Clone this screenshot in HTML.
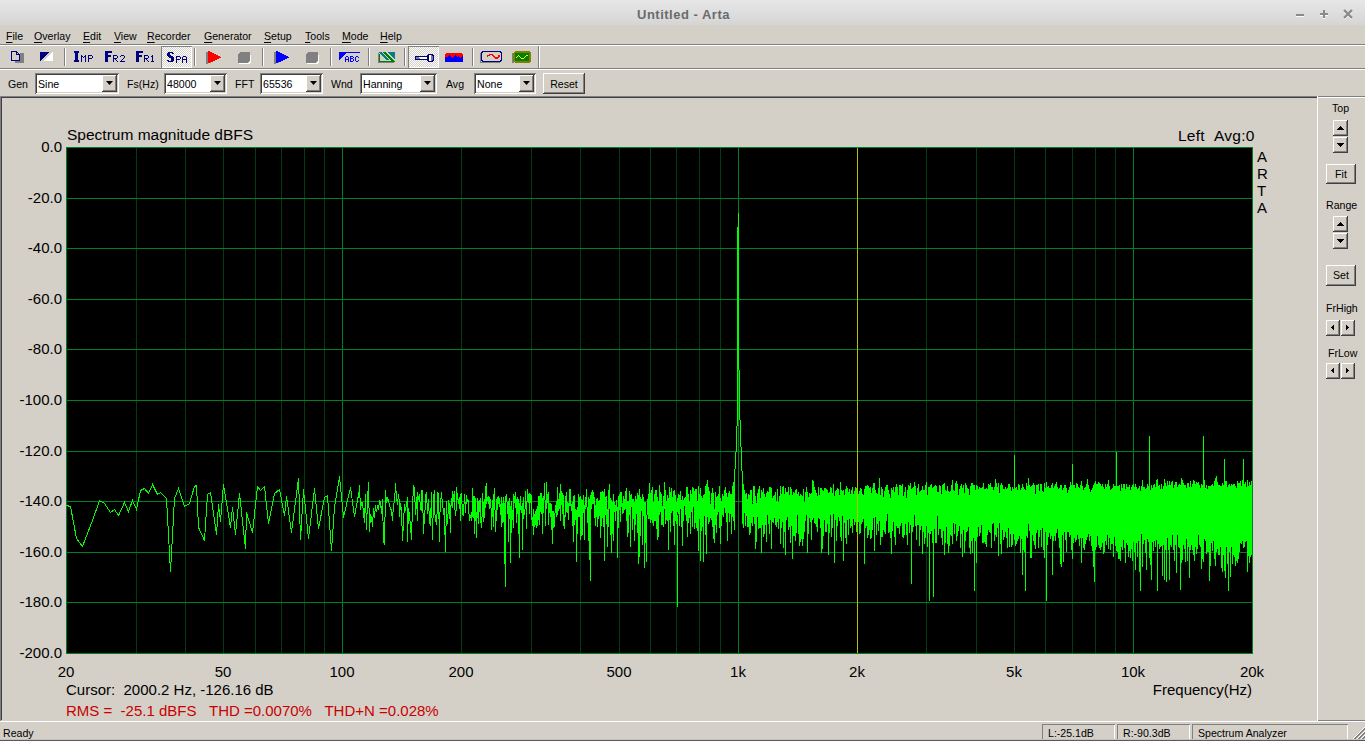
<!DOCTYPE html><html><head><meta charset="utf-8"><style>
*{margin:0;padding:0;box-sizing:border-box}
html,body{width:1365px;height:741px;overflow:hidden;background:#d4d0c8;font-family:"Liberation Sans",sans-serif;position:relative}
.a{position:absolute;white-space:nowrap}
.ui{font-size:11.5px;color:#000;line-height:13px;transform:scaleX(.92);transform-origin:0 0}
.ch{font-size:15px;color:#000;line-height:17px}
.sunk{background:#fff;box-shadow:inset 1px 1px #808080,inset -1px -1px #fff,inset 2px 2px #404040,inset -2px -2px #d4d0c8}
.btn{background:#d4d0c8;box-shadow:inset -1px -1px #404040,inset 1px 1px #fff,inset -2px -2px #808080,inset 2px 2px #d4d0c8}
.hl{position:absolute;height:1px}
.vl{position:absolute;width:1px}
u{text-decoration:underline;text-underline-offset:2px;text-decoration-thickness:1px}
</style></head><body><div class="a" style="left:0;top:0;width:1365px;height:25px;background:linear-gradient(#e7e7e7,#d5d5d5)"></div>
<div class="a" style="left:637px;top:6px;font-size:13px;letter-spacing:0.5px;font-weight:bold;color:#6b6b6b;line-height:17px">Untitled - Arta</div>

<div class="a" style="left:1296px;top:14px;width:8px;height:2px;background:#8a8a8a;box-shadow:0 1px #fafafa"></div>
<div class="a" style="left:1320px;top:13px;width:8px;height:2px;background:#8a8a8a;box-shadow:0 1px #fafafa"></div>
<div class="a" style="left:1323px;top:10px;width:2px;height:8px;background:#8a8a8a;box-shadow:0 1px #fafafa"></div>
<svg class="a" style="left:1342px;top:8px" width="12" height="12"><path d="M2 2L10 10M10 2L2 10" stroke="#fafafa" stroke-width="2.4" transform="translate(0,0.8)"/><path d="M2 2L10 10M10 2L2 10" stroke="#8a8a8a" stroke-width="2.4"/></svg>
<div class="a ui" style="left:6px;top:30px"><u>F</u>ile</div>
<div class="a ui" style="left:34px;top:30px"><u>O</u>verlay</div>
<div class="a ui" style="left:83px;top:30px"><u>E</u>dit</div>
<div class="a ui" style="left:114px;top:30px"><u>V</u>iew</div>
<div class="a ui" style="left:147px;top:30px"><u>R</u>ecorder</div>
<div class="a ui" style="left:204px;top:30px"><u>G</u>enerator</div>
<div class="a ui" style="left:264px;top:30px"><u>S</u>etup</div>
<div class="a ui" style="left:305px;top:30px"><u>T</u>ools</div>
<div class="a ui" style="left:342px;top:30px"><u>M</u>ode</div>
<div class="a ui" style="left:380px;top:30px"><u>H</u>elp</div>
<div class="hl" style="left:0;top:44px;width:1365px;background:#808080"></div>
<div class="hl" style="left:0;top:45px;width:1365px;background:#fff"></div>
<div class="hl" style="left:0;top:68px;width:1365px;background:#808080"></div>
<div class="hl" style="left:0;top:69px;width:1365px;background:#fff"></div>
<div class="hl" style="left:0;top:96px;width:1318px;background:#808080"></div>
<div class="hl" style="left:1px;top:97px;width:1316px;background:#404040"></div>
<div class="vl" style="left:0;top:96px;height:625px;background:#808080"></div>
<div class="vl" style="left:1px;top:97px;height:623px;background:#404040"></div>
<div class="vl" style="left:1317px;top:96px;height:626px;background:#fff"></div>
<div class="hl" style="left:0;top:721px;width:1318px;background:#fff"></div>
<div class="hl" style="left:1318px;top:96px;width:47px;background:#808080"></div>
<div class="hl" style="left:1318px;top:97px;width:47px;background:#fff"></div>
<div class="hl" style="left:1318px;top:720px;width:47px;background:#808080"></div>
<div class="hl" style="left:1318px;top:721px;width:47px;background:#fff"></div>
<div class="vl" style="left:64px;top:48px;height:18px;background:#808080"></div><div class="vl" style="left:65px;top:48px;height:18px;background:#fff"></div>
<div class="vl" style="left:194px;top:48px;height:18px;background:#808080"></div><div class="vl" style="left:195px;top:48px;height:18px;background:#fff"></div>
<div class="vl" style="left:262px;top:48px;height:18px;background:#808080"></div><div class="vl" style="left:263px;top:48px;height:18px;background:#fff"></div>
<div class="vl" style="left:330px;top:48px;height:18px;background:#808080"></div><div class="vl" style="left:331px;top:48px;height:18px;background:#fff"></div>
<div class="vl" style="left:368px;top:48px;height:18px;background:#808080"></div><div class="vl" style="left:369px;top:48px;height:18px;background:#fff"></div>
<div class="vl" style="left:404px;top:48px;height:18px;background:#808080"></div><div class="vl" style="left:405px;top:48px;height:18px;background:#fff"></div>
<div class="vl" style="left:472px;top:48px;height:18px;background:#808080"></div><div class="vl" style="left:473px;top:48px;height:18px;background:#fff"></div>
<div class="vl" style="left:538px;top:46px;height:22px;background:#808080"></div><div class="vl" style="left:539px;top:46px;height:22px;background:#fff"></div>
<div class="a ui" style="left:8px;top:78px">Gen</div>
<div class="a ui" style="left:127px;top:78px">Fs(Hz)</div>
<div class="a ui" style="left:235px;top:78px">FFT</div>
<div class="a ui" style="left:331px;top:78px">Wnd</div>
<div class="a ui" style="left:446px;top:78px">Avg</div>
<div class="a sunk" style="left:35px;top:73px;width:84px;height:21px"></div>
<div class="a ui" style="left:38px;top:78px">Sine</div>
<div class="a btn" style="left:102px;top:75px;width:15px;height:17px"></div>
<svg class="a" style="left:106px;top:81px" width="7" height="4"><path d="M0 0H7L3.5 4Z" fill="#000"/></svg>
<div class="a sunk" style="left:164px;top:73px;width:63px;height:21px"></div>
<div class="a ui" style="left:167px;top:78px">48000</div>
<div class="a btn" style="left:210px;top:75px;width:15px;height:17px"></div>
<svg class="a" style="left:214px;top:81px" width="7" height="4"><path d="M0 0H7L3.5 4Z" fill="#000"/></svg>
<div class="a sunk" style="left:260px;top:73px;width:63px;height:21px"></div>
<div class="a ui" style="left:263px;top:78px">65536</div>
<div class="a btn" style="left:306px;top:75px;width:15px;height:17px"></div>
<svg class="a" style="left:310px;top:81px" width="7" height="4"><path d="M0 0H7L3.5 4Z" fill="#000"/></svg>
<div class="a sunk" style="left:360px;top:73px;width:77px;height:21px"></div>
<div class="a ui" style="left:363px;top:78px">Hanning</div>
<div class="a btn" style="left:420px;top:75px;width:15px;height:17px"></div>
<svg class="a" style="left:424px;top:81px" width="7" height="4"><path d="M0 0H7L3.5 4Z" fill="#000"/></svg>
<div class="a sunk" style="left:474px;top:73px;width:62px;height:21px"></div>
<div class="a ui" style="left:477px;top:78px">None</div>
<div class="a btn" style="left:519px;top:75px;width:15px;height:17px"></div>
<svg class="a" style="left:523px;top:81px" width="7" height="4"><path d="M0 0H7L3.5 4Z" fill="#000"/></svg>
<div class="a btn" style="left:543px;top:73px;width:42px;height:21px"><div class="ui" style="text-align:center;line-height:23px;transform-origin:50% 0">Reset</div></div>
<div class="a ch" style="left:67px;top:126px;font-size:15.5px">Spectrum magnitude dBFS</div>
<div class="a ch" style="left:1178px;top:127px;font-size:15.5px;letter-spacing:.25px">Left&nbsp;&nbsp;Avg:0</div>
<div class="a ch" style="left:1257px;top:148px">A</div>
<div class="a ch" style="left:1257px;top:165px">R</div>
<div class="a ch" style="left:1257px;top:182px">T</div>
<div class="a ch" style="left:1257px;top:199px">A</div>
<div class="a ch" style="right:1303px;top:138px">0.0</div>
<div class="a ch" style="right:1303px;top:189px">-20.0</div>
<div class="a ch" style="right:1303px;top:239px">-40.0</div>
<div class="a ch" style="right:1303px;top:290px">-60.0</div>
<div class="a ch" style="right:1303px;top:340px">-80.0</div>
<div class="a ch" style="right:1303px;top:391px">-100.0</div>
<div class="a ch" style="right:1303px;top:442px">-120.0</div>
<div class="a ch" style="right:1303px;top:492px">-140.0</div>
<div class="a ch" style="right:1303px;top:543px">-160.0</div>
<div class="a ch" style="right:1303px;top:593px">-180.0</div>
<div class="a ch" style="right:1303px;top:644px">-200.0</div>
<div class="a ch" style="left:26px;width:80px;text-align:center;top:663px">20</div>
<div class="a ch" style="left:183px;width:80px;text-align:center;top:663px">50</div>
<div class="a ch" style="left:302px;width:80px;text-align:center;top:663px">100</div>
<div class="a ch" style="left:421px;width:80px;text-align:center;top:663px">200</div>
<div class="a ch" style="left:579px;width:80px;text-align:center;top:663px">500</div>
<div class="a ch" style="left:698px;width:80px;text-align:center;top:663px">1k</div>
<div class="a ch" style="left:817px;width:80px;text-align:center;top:663px">2k</div>
<div class="a ch" style="left:974px;width:80px;text-align:center;top:663px">5k</div>
<div class="a ch" style="left:1093px;width:80px;text-align:center;top:663px">10k</div>
<div class="a ch" style="left:1212px;width:80px;text-align:center;top:663px">20k</div>
<div class="a ch" style="left:66px;top:681px">Cursor:&nbsp;&nbsp;2000.2 Hz, -126.16 dB</div>
<div class="a ch" style="right:113px;top:681px">Frequency(Hz)</div>
<div class="a ch" style="left:66px;top:702px;color:#c80000">RMS =&nbsp;&nbsp;-25.1 dBFS&nbsp;&nbsp;&nbsp;THD =0.0070%&nbsp;&nbsp;&nbsp;THD+N =0.028%</div>
<svg class="a" style="left:0;top:0" width="1365" height="741" shape-rendering="crispEdges">
<rect x="66" y="147" width="1187" height="507" fill="#000"/>
<path d="M136.5 147V653M185.5 147V653M223.5 147V653M255.5 147V653M281.5 147V653M304.5 147V653M324.5 147V653M461.5 147V653M531.5 147V653M580.5 147V653M619.5 147V653M650.5 147V653M676.5 147V653M699.5 147V653M720.5 147V653M857.5 147V653M926.5 147V653M976.5 147V653M1014.5 147V653M1045.5 147V653M1072.5 147V653M1095.5 147V653M1115.5 147V653" stroke="#003c14" stroke-width="1" fill="none"/>
<path d="M342.5 147V653M738.5 147V653M1133.5 147V653M66 198.5H1252M66 248.5H1252M66 299.5H1252M66 349.5H1252M66 400.5H1252M66 451.5H1252M66 501.5H1252M66 552.5H1252M66 602.5H1252" stroke="#008020" stroke-width="1" fill="none"/>
<rect x="66.5" y="147.5" width="1186" height="506" stroke="#008020" fill="none"/>
<path d="M66.5 505.5L70.5 506.5L76.5 538.5L82.5 546.5L92.5 520.5L99.5 500.5L104.5 503.5L110.5 512.5L114.5 509.5L118.5 515.5L124.5 502.5L128.5 511.5L132.5 500.5L136.5 509.5L140.5 490.5L144.5 488.5L148.5 493.5L152.5 484.5L157.5 494.5L160.5 492.5L166.5 498.5L170.5 571.5L174.5 498.5L178.5 488.5L184.5 506.5L189.5 503.5L194.5 486.5L196.5 485.5L198.5 527.5L204.5 540.5L207.5 494.5L210.5 492.5L216.5 534.5L218.5 504.5L220.5 521.5L223.5 484.5L230.5 527.5L232.5 507.5L235.5 534.5L239.5 493.5L245.5 548.5L246.5 512.5L252.5 532.5L257.5 486.5L260.5 490.5L264.5 486.5L268.5 523.5L274.5 493.5L279.5 489.5L284.5 515.5L286.5 496.5L291.5 532.5L298.5 478.5L300.5 539.5L303.5 489.5L308.5 538.5L314.5 488.5L318.5 528.5L324.5 497.5L327.5 495.5L331.5 550.5L334.5 507.5L339.5 476.5L343.5 517.5L350.5 487.5L354.5 516.5L359.5 489.5L359.5 485.5L360.5 509.5L361.5 502.5L362.5 502.5L364.5 522.5L365.5 494.5L366.5 529.5L367.5 500.5L368.5 482.5L369.5 531.5L370.5 515.5L371.5 517.5L372.5 526.5L373.5 508.5L374.5 517.5L375.5 505.5L376.5 511.5L377.5 506.5L378.5 509.5L379.5 500.5L380.5 501.5L381.5 513.5L382.5 499.5L383.5 541.5L384.5 544.5L385.5 490.5L386.5 502.5L387.5 498.5L388.5 500.5L389.5 505.5L390.5 508.5L391.5 510.5L392.5 520.5L393.5 503.5L394.5 502.5L395.5 483.5L396.5 497.5L397.5 504.5L398.5 494.5L399.5 502.5L399.5 502.5L399.5 516.5L399.5 516.5L400.5 503.5L401.5 510.5L402.5 540.5L403.5 521.5L404.5 504.5L405.5 510.5L406.5 504.5L407.5 497.5L407.5 497.5L407.5 541.5L407.5 541.5L408.5 508.5L409.5 515.5L410.5 525.5L411.5 539.5L412.5 504.5L412.5 504.5L412.5 505.5L412.5 505.5L413.5 486.5L414.5 488.5L415.5 514.5L416.5 497.5L417.5 520.5L417.5 520.5L417.5 492.5L417.5 492.5L418.5 499.5L419.5 494.5L420.5 509.5L421.5 510.5L421.5 510.5L421.5 490.5L421.5 490.5L422.5 490.5L423.5 533.5L424.5 515.5L425.5 505.5L425.5 505.5L425.5 495.5L425.5 495.5L426.5 492.5L427.5 513.5L428.5 500.5L428.5 500.5L428.5 499.5L428.5 499.5L429.5 521.5L430.5 525.5L431.5 492.5L431.5 492.5L431.5 495.5L431.5 495.5L432.5 539.5L433.5 497.5L434.5 490.5L434.5 490.5L434.5 509.5L434.5 509.5L435.5 519.5L436.5 524.5L437.5 504.5L437.5 504.5L437.5 492.5L437.5 492.5L438.5 494.5L439.5 541.5L439.5 541.5L439.5 521.5L439.5 521.5L440.5 503.5L441.5 492.5L442.5 505.5L442.5 505.5L442.5 500.5L442.5 500.5L443.5 514.5L444.5 508.5L444.5 508.5L444.5 518.5L444.5 518.5L445.5 551.5L446.5 501.5L446.5 501.5L446.5 520.5L446.5 520.5L447.5 523.5L448.5 505.5L448.5 505.5L448.5 500.5L448.5 500.5L449.5 504.5L450.5 532.5L450.5 532.5L450.5 506.5L450.5 506.5L451.5 504.5L452.5 491.5L452.5 491.5L452.5 507.5L452.5 507.5L453.5 497.5L454.5 491.5L454.5 491.5L454.5 504.5L454.5 504.5L455.5 515.5L456.5 507.5L456.5 507.5L456.5 487.5L456.5 487.5L457.5 498.5L458.5 500.5L458.5 500.5L458.5 503.5L458.5 503.5L459.5 497.5L460.5 520.5L460.5 520.5L460.5 494.5L460.5 494.5L461.5 495.5L461.5 495.5L461.5 493.5L461.5 493.5L462.5 514.5L463.5 515.5L463.5 515.5L463.5 513.5L463.5 513.5L464.5 494.5L465.5 512.5L465.5 512.5L465.5 502.5L465.5 502.5L466.5 503.5L466.5 503.5L466.5 495.5L466.5 495.5L467.5 501.5L468.5 500.5L468.5 500.5L468.5 506.5L468.5 506.5L469.5 520.5L469.5 520.5L469.5 516.5L469.5 516.5L470.5 515.5L471.5 520.5L471.5 520.5L471.5 512.5L471.5 512.5L472.5 516.5L472.5 516.5L472.5 488.5L472.5 488.5L473.5 502.5L474.5 533.5L474.5 533.5L474.5 496.5L474.5 496.5L475.5 500.5L475.5 500.5L475.5 520.5L475.5 520.5L476.5 512.5L476.5 512.5L476.5 537.5L476.5 537.5L477.5 498.5L478.5 504.5L478.5 504.5L478.5 523.5L478.5 523.5L479.5 500.5L479.5 500.5L479.5 502.5L479.5 502.5L480.5 498.5L480.5 498.5L480.5 517.5L480.5 517.5L481.5 527.5L482.5 507.5L482.5 507.5L482.5 493.5L482.5 493.5L483.5 510.5L483.5 510.5L483.5 521.5L483.5 521.5L484.5 499.5L484.5 499.5L484.5 517.5L484.5 517.5L485.5 499.5L485.5 499.5L485.5 488.5L485.5 488.5L486.5 483.5L486.5 483.5L486.5 503.5L486.5 503.5L487.5 497.5L488.5 503.5L488.5 503.5L488.5 496.5L488.5 496.5L489.5 498.5L489.5 498.5L489.5 508.5L489.5 508.5L490.5 502.5L490.5 502.5L490.5 499.5L490.5 499.5L491.5 516.5L491.5 516.5L491.5 529.5L491.5 529.5L492.5 505.5L492.5 505.5L492.5 505.5L492.5 505.5L493.5 494.5L493.5 494.5L493.5 526.5L493.5 526.5L494.5 488.5L494.5 488.5L494.5 497.5L494.5 497.5L495.5 521.5L495.5 521.5L495.5 531.5L495.5 531.5L496.5 510.5L496.5 510.5L496.5 501.5L496.5 501.5L497.5 497.5L497.5 497.5L497.5 509.5L497.5 509.5L498.5 496.5L498.5 496.5L498.5 503.5L498.5 503.5L499.5 504.5L499.5 504.5L499.5 498.5L499.5 498.5L500.5 514.5L500.5 514.5L500.5 511.5L500.5 511.5L501.5 497.5L501.5 497.5L501.5 526.5L501.5 526.5L502.5 503.5L502.5 503.5L502.5 522.5L502.5 522.5L503.5 520.5L503.5 520.5L503.5 497.5L503.5 497.5L504.5 507.5L504.5 507.5L504.5 540.5L504.5 540.5L505.5 586.5L505.5 586.5L505.5 496.5L505.5 496.5L506.5 501.5L506.5 501.5L506.5 494.5L506.5 494.5L507.5 509.5L507.5 509.5L507.5 513.5L507.5 513.5L508.5 501.5L508.5 501.5L508.5 541.5L508.5 541.5L509.5 498.5L509.5 498.5L509.5 505.5L509.5 505.5L510.5 507.5L510.5 507.5L510.5 562.5L510.5 562.5L511.5 504.5L511.5 504.5L511.5 501.5L511.5 501.5L512.5 518.5L512.5 518.5L512.5 511.5L512.5 511.5L513.5 527.5L513.5 527.5L513.5 493.5L513.5 509.5L514.5 496.5L514.5 496.5L514.5 499.5L514.5 499.5L515.5 496.5L515.5 496.5L515.5 492.5L515.5 492.5L516.5 522.5L516.5 522.5L516.5 501.5L516.5 501.5L517.5 497.5L517.5 497.5L517.5 498.5L517.5 498.5L518.5 529.5L518.5 529.5L518.5 498.5L518.5 509.5L519.5 557.5L519.5 557.5L519.5 510.5L519.5 510.5L520.5 496.5L520.5 496.5L520.5 509.5L520.5 509.5L521.5 510.5L521.5 510.5L521.5 506.5L521.5 506.5L522.5 519.5L522.5 549.5L522.5 508.5L522.5 508.5L523.5 497.5L523.5 497.5L523.5 518.5L523.5 518.5L524.5 512.5L524.5 512.5L524.5 512.5L524.5 512.5L525.5 506.5L525.5 506.5L525.5 491.5L525.5 491.5L526.5 510.5L526.5 528.5L526.5 509.5L526.5 509.5L527.5 495.5L527.5 495.5L527.5 489.5L527.5 489.5L528.5 498.5L528.5 498.5L528.5 502.5L528.5 502.5L529.5 493.5L529.5 493.5L529.5 513.5L529.5 497.5L530.5 494.5L530.5 494.5L530.5 502.5L530.5 502.5L531.5 495.5L531.5 495.5L531.5 519.5L531.5 519.5L532.5 518.5L532.5 518.5L532.5 517.5L532.5 517.5L533.5 534.5L533.5 534.5L533.5 509.5L533.5 509.5L534.5 526.5L534.5 526.5L534.5 513.5L534.5 516.5L535.5 511.5L535.5 511.5L535.5 524.5L535.5 524.5L536.5 523.5L536.5 508.5L536.5 527.5L536.5 527.5L537.5 523.5L537.5 523.5L537.5 516.5L537.5 516.5L538.5 496.5L538.5 496.5L538.5 516.5L538.5 515.5L539.5 524.5L539.5 524.5L539.5 498.5L539.5 498.5L540.5 493.5L540.5 493.5L540.5 511.5L540.5 504.5L541.5 494.5L541.5 494.5L541.5 493.5L541.5 493.5L542.5 533.5L542.5 533.5L542.5 500.5L542.5 500.5L543.5 496.5L543.5 496.5L543.5 512.5L543.5 512.5L544.5 483.5L544.5 483.5L544.5 493.5L544.5 492.5L545.5 507.5L545.5 503.5L545.5 525.5L545.5 525.5L546.5 482.5L546.5 482.5L546.5 508.5L546.5 508.5L547.5 494.5L547.5 493.5L547.5 502.5L547.5 502.5L548.5 500.5L548.5 524.5L548.5 492.5L548.5 492.5L549.5 512.5L549.5 512.5L549.5 506.5L549.5 506.5L550.5 512.5L550.5 512.5L550.5 503.5L550.5 503.5L551.5 529.5L551.5 529.5L551.5 504.5L551.5 504.5L552.5 543.5L552.5 543.5L552.5 511.5L552.5 511.5L553.5 527.5L553.5 527.5L553.5 511.5L553.5 511.5L554.5 525.5L554.5 526.5L554.5 521.5L554.5 521.5L555.5 505.5L555.5 505.5L555.5 505.5L555.5 505.5L556.5 516.5L556.5 516.5L556.5 501.5L556.5 501.5L557.5 509.5L557.5 514.5L557.5 487.5L557.5 487.5L558.5 510.5L558.5 510.5L558.5 510.5L558.5 510.5L559.5 496.5L559.5 508.5L559.5 493.5L559.5 493.5L560.5 520.5L560.5 520.5L560.5 484.5L560.5 484.5L561.5 497.5L561.5 497.5L561.5 494.5L561.5 495.5L562.5 513.5L562.5 513.5L562.5 493.5L562.5 493.5L563.5 496.5L563.5 496.5L563.5 525.5L563.5 500.5L564.5 528.5L564.5 528.5L564.5 516.5L564.5 527.5L565.5 507.5L565.5 507.5L565.5 495.5L565.5 503.5L566.5 511.5L566.5 511.5L566.5 491.5L566.5 496.5L567.5 506.5L567.5 506.5L567.5 512.5L567.5 512.5L568.5 505.5L568.5 519.5L568.5 503.5L568.5 503.5L569.5 505.5L569.5 505.5L569.5 489.5L569.5 489.5L570.5 489.5L570.5 489.5L570.5 503.5L570.5 503.5L571.5 508.5L571.5 503.5L571.5 510.5L571.5 510.5L572.5 507.5L572.5 501.5L572.5 510.5L572.5 510.5L573.5 541.5L573.5 541.5L573.5 497.5L573.5 497.5L574.5 495.5L574.5 495.5L574.5 524.5L574.5 500.5L575.5 518.5L575.5 519.5L575.5 509.5L575.5 509.5L576.5 518.5L576.5 509.5L576.5 561.5L576.5 561.5L577.5 507.5L577.5 507.5L577.5 531.5L577.5 531.5L578.5 494.5L578.5 494.5L578.5 516.5L578.5 512.5L579.5 504.5L579.5 496.5L579.5 516.5L579.5 516.5L580.5 496.5L580.5 496.5L580.5 539.5L580.5 539.5L581.5 533.5L581.5 533.5L581.5 499.5L581.5 499.5L582.5 501.5L582.5 501.5L582.5 534.5L582.5 501.5L583.5 504.5L583.5 494.5L583.5 509.5L583.5 509.5L584.5 516.5L584.5 504.5L584.5 539.5L584.5 513.5L585.5 505.5L585.5 505.5L585.5 498.5L585.5 504.5L586.5 489.5L586.5 488.5L586.5 503.5L586.5 503.5L587.5 510.5L587.5 510.5L587.5 522.5L587.5 522.5L588.5 512.5L588.5 496.5L588.5 540.5L588.5 540.5L589.5 506.5L589.5 498.5L589.5 538.5L589.5 538.5L590.5 580.5L590.5 580.5L590.5 494.5L590.5 507.5L591.5 492.5L591.5 492.5L591.5 508.5L591.5 508.5L592.5 500.5L592.5 500.5L592.5 489.5L592.5 495.5L593.5 503.5L593.5 491.5L593.5 503.5L593.5 503.5L594.5 497.5L594.5 497.5L594.5 509.5L594.5 509.5L595.5 525.5L595.5 525.5L595.5 507.5L595.5 507.5L596.5 502.5L596.5 516.5L596.5 499.5L596.5 499.5L597.5 503.5L597.5 526.5L597.5 498.5L597.5 498.5L598.5 518.5L598.5 518.5L598.5 500.5L598.5 505.5L599.5 514.5L599.5 499.5L599.5 515.5L599.5 515.5L600.5 508.5L600.5 491.5L600.5 537.5L600.5 537.5L601.5 514.5L601.5 514.5L601.5 491.5L601.5 508.5L602.5 511.5L602.5 490.5L602.5 517.5L602.5 517.5L603.5 504.5L603.5 504.5L603.5 492.5L603.5 492.5L604.5 560.5L604.5 560.5L604.5 488.5L604.5 500.5L605.5 497.5L605.5 497.5L605.5 505.5L605.5 505.5L606.5 523.5L606.5 523.5L606.5 495.5L606.5 518.5L607.5 509.5L607.5 509.5L607.5 546.5L607.5 546.5L608.5 502.5L608.5 489.5L608.5 526.5L608.5 490.5L609.5 507.5L609.5 483.5L609.5 508.5L609.5 508.5L610.5 501.5L610.5 497.5L610.5 534.5L610.5 534.5L611.5 524.5L611.5 552.5L611.5 499.5L611.5 507.5L612.5 532.5L612.5 532.5L612.5 501.5L612.5 527.5L613.5 540.5L613.5 540.5L613.5 493.5L613.5 513.5L614.5 504.5L614.5 511.5L614.5 502.5L614.5 502.5L615.5 508.5L615.5 520.5L615.5 506.5L615.5 506.5L616.5 504.5L616.5 510.5L616.5 500.5L616.5 500.5L617.5 518.5L617.5 557.5L617.5 507.5L617.5 507.5L618.5 511.5L618.5 495.5L618.5 527.5L618.5 516.5L619.5 501.5L619.5 503.5L619.5 493.5L619.5 498.5L620.5 521.5L620.5 521.5L620.5 492.5L620.5 492.5L621.5 492.5L621.5 492.5L621.5 506.5L621.5 501.5L622.5 512.5L622.5 513.5L622.5 502.5L622.5 508.5L623.5 512.5L623.5 512.5L623.5 495.5L623.5 500.5L624.5 509.5L624.5 509.5L624.5 499.5L624.5 499.5L625.5 508.5L625.5 508.5L625.5 493.5L625.5 494.5L626.5 488.5L626.5 488.5L626.5 519.5L626.5 519.5L627.5 522.5L627.5 500.5L627.5 536.5L627.5 536.5L628.5 501.5L628.5 501.5L628.5 532.5L628.5 510.5L629.5 504.5L629.5 490.5L629.5 514.5L629.5 514.5L630.5 495.5L630.5 495.5L630.5 546.5L630.5 503.5L631.5 494.5L631.5 494.5L631.5 506.5L631.5 498.5L632.5 499.5L632.5 499.5L632.5 529.5L632.5 529.5L633.5 500.5L633.5 513.5L633.5 499.5L633.5 499.5L634.5 537.5L634.5 540.5L634.5 501.5L634.5 524.5L635.5 524.5L635.5 524.5L635.5 496.5L635.5 496.5L636.5 504.5L636.5 513.5L636.5 499.5L636.5 499.5L637.5 528.5L637.5 528.5L637.5 492.5L637.5 501.5L638.5 563.5L638.5 563.5L638.5 494.5L638.5 495.5L639.5 507.5L639.5 556.5L639.5 489.5L639.5 489.5L640.5 503.5L640.5 503.5L640.5 535.5L640.5 509.5L641.5 510.5L641.5 510.5L641.5 499.5L641.5 499.5L642.5 512.5L642.5 493.5L642.5 544.5L642.5 507.5L643.5 497.5L643.5 497.5L643.5 515.5L643.5 515.5L644.5 502.5L644.5 502.5L644.5 567.5L644.5 567.5L645.5 520.5L645.5 520.5L645.5 501.5L645.5 514.5L646.5 541.5L646.5 519.5L646.5 561.5L646.5 531.5L647.5 499.5L647.5 499.5L647.5 513.5L647.5 505.5L648.5 499.5L648.5 518.5L648.5 494.5L648.5 494.5L649.5 518.5L649.5 518.5L649.5 482.5L649.5 501.5L650.5 514.5L650.5 522.5L650.5 495.5L650.5 495.5L651.5 490.5L651.5 490.5L651.5 519.5L651.5 504.5L652.5 504.5L652.5 486.5L652.5 522.5L652.5 522.5L653.5 502.5L653.5 502.5L653.5 525.5L653.5 514.5L654.5 494.5L654.5 494.5L654.5 520.5L654.5 507.5L655.5 497.5L655.5 489.5L655.5 520.5L655.5 498.5L656.5 490.5L656.5 490.5L656.5 528.5L656.5 505.5L657.5 519.5L657.5 496.5L657.5 539.5L657.5 502.5L658.5 510.5L658.5 500.5L658.5 536.5L658.5 522.5L659.5 493.5L659.5 484.5L659.5 514.5L659.5 491.5L660.5 500.5L660.5 503.5L660.5 491.5L660.5 499.5L661.5 524.5L661.5 524.5L661.5 494.5L661.5 494.5L662.5 517.5L662.5 524.5L662.5 512.5L662.5 512.5L663.5 519.5L663.5 526.5L663.5 510.5L663.5 510.5L664.5 482.5L664.5 482.5L664.5 502.5L664.5 498.5L665.5 518.5L665.5 489.5L665.5 523.5L665.5 501.5L666.5 519.5L666.5 519.5L666.5 500.5L666.5 513.5L667.5 495.5L667.5 495.5L667.5 520.5L667.5 505.5L668.5 512.5L668.5 498.5L668.5 549.5L668.5 503.5L669.5 492.5L669.5 486.5L669.5 517.5L669.5 517.5L670.5 522.5L670.5 531.5L670.5 492.5L670.5 492.5L671.5 494.5L671.5 487.5L671.5 512.5L671.5 512.5L672.5 508.5L672.5 508.5L672.5 497.5L672.5 497.5L673.5 511.5L673.5 490.5L673.5 525.5L673.5 503.5L674.5 507.5L674.5 489.5L674.5 544.5L674.5 544.5L675.5 499.5L675.5 518.5L675.5 494.5L675.5 511.5L676.5 503.5L676.5 501.5L676.5 523.5L676.5 512.5L677.5 498.5L677.5 498.5L677.5 511.5L677.5 508.5L678.5 513.5L678.5 513.5L678.5 493.5L678.5 497.5L679.5 525.5L679.5 525.5L679.5 494.5L679.5 523.5L680.5 495.5L680.5 490.5L680.5 507.5L680.5 498.5L681.5 519.5L681.5 519.5L681.5 499.5L681.5 508.5L682.5 545.5L682.5 545.5L682.5 495.5L682.5 524.5L683.5 502.5L683.5 520.5L683.5 501.5L683.5 501.5L684.5 498.5L684.5 498.5L684.5 505.5L684.5 501.5L685.5 499.5L685.5 514.5L685.5 496.5L685.5 510.5L686.5 487.5L686.5 487.5L686.5 520.5L686.5 508.5L687.5 493.5L687.5 536.5L687.5 487.5L687.5 487.5L688.5 499.5L688.5 494.5L688.5 522.5L688.5 507.5L689.5 502.5L689.5 516.5L689.5 501.5L689.5 501.5L690.5 533.5L690.5 533.5L690.5 489.5L690.5 495.5L691.5 510.5L691.5 511.5L691.5 493.5L691.5 501.5L692.5 487.5L692.5 487.5L692.5 526.5L692.5 499.5L693.5 502.5L693.5 506.5L693.5 487.5L693.5 493.5L694.5 494.5L694.5 490.5L694.5 528.5L694.5 498.5L695.5 489.5L695.5 488.5L695.5 522.5L695.5 507.5L696.5 508.5L696.5 488.5L696.5 527.5L696.5 497.5L697.5 510.5L697.5 500.5L697.5 513.5L697.5 511.5L698.5 550.5L698.5 550.5L698.5 486.5L698.5 486.5L699.5 512.5L699.5 518.5L699.5 494.5L699.5 494.5L700.5 495.5L700.5 487.5L700.5 560.5L700.5 490.5L701.5 518.5L701.5 530.5L701.5 495.5L701.5 514.5L702.5 526.5L702.5 526.5L702.5 497.5L702.5 510.5L703.5 495.5L703.5 495.5L703.5 561.5L703.5 497.5L704.5 515.5L704.5 515.5L704.5 496.5L704.5 502.5L705.5 486.5L705.5 486.5L705.5 534.5L705.5 534.5L706.5 505.5L706.5 553.5L706.5 487.5L706.5 487.5L707.5 480.5L707.5 480.5L707.5 516.5L707.5 505.5L708.5 487.5L708.5 487.5L708.5 523.5L708.5 493.5L709.5 491.5L709.5 491.5L709.5 521.5L709.5 521.5L710.5 508.5L710.5 505.5L710.5 517.5L710.5 512.5L711.5 495.5L711.5 492.5L711.5 513.5L711.5 513.5L712.5 526.5L712.5 526.5L712.5 487.5L712.5 494.5L713.5 495.5L713.5 538.5L713.5 492.5L713.5 506.5L714.5 525.5L714.5 542.5L714.5 510.5L714.5 512.5L715.5 506.5L715.5 524.5L715.5 491.5L715.5 501.5L716.5 503.5L716.5 496.5L716.5 532.5L716.5 519.5L717.5 511.5L717.5 513.5L717.5 495.5L717.5 508.5L718.5 495.5L718.5 511.5L718.5 493.5L718.5 494.5L719.5 493.5L719.5 485.5L719.5 527.5L719.5 527.5L720.5 498.5L720.5 498.5L720.5 543.5L720.5 501.5L721.5 518.5L721.5 500.5L721.5 525.5L721.5 511.5L722.5 496.5L722.5 493.5L722.5 514.5L722.5 514.5L723.5 496.5L723.5 496.5L723.5 516.5L723.5 506.5L724.5 502.5L724.5 507.5L724.5 489.5L724.5 496.5L725.5 506.5L725.5 486.5L725.5 512.5L725.5 512.5L726.5 506.5L726.5 492.5L726.5 521.5L726.5 498.5L727.5 510.5L727.5 540.5L727.5 496.5L727.5 502.5L728.5 493.5L728.5 493.5L728.5 507.5L728.5 504.5L729.5 521.5L729.5 490.5L729.5 521.5L729.5 502.5L730.5 508.5L730.5 493.5L730.5 513.5L730.5 513.5L731.5 507.5L731.5 533.5L731.5 501.5L731.5 501.5L732.5 486.5L732.5 486.5L732.5 513.5L732.5 513.5L733.5 520.5L733.5 520.5L733.5 497.5L733.5 508.5L734.5 507.5L734.5 529.5L734.5 495.5L734.5 514.5M742.5 523.5L742.5 488.5L742.5 523.5L742.5 502.5L743.5 490.5L743.5 490.5L743.5 527.5L743.5 503.5L744.5 504.5L744.5 504.5L744.5 489.5L744.5 499.5L745.5 525.5L745.5 525.5L745.5 493.5L745.5 501.5L746.5 499.5L746.5 492.5L746.5 515.5L746.5 515.5L747.5 499.5L747.5 499.5L747.5 526.5L747.5 507.5L748.5 494.5L748.5 494.5L748.5 526.5L748.5 506.5L749.5 501.5L749.5 494.5L749.5 534.5L749.5 503.5L750.5 515.5L750.5 532.5L750.5 489.5L750.5 511.5L751.5 491.5L751.5 489.5L751.5 522.5L751.5 504.5L752.5 506.5L752.5 525.5L752.5 503.5L752.5 521.5L753.5 512.5L753.5 516.5L753.5 485.5L753.5 514.5L754.5 509.5L754.5 523.5L754.5 485.5L754.5 516.5L755.5 496.5L755.5 548.5L755.5 495.5L755.5 502.5L756.5 512.5L756.5 541.5L756.5 502.5L756.5 534.5L757.5 500.5L757.5 511.5L757.5 493.5L757.5 493.5L758.5 519.5L758.5 488.5L758.5 528.5L758.5 509.5L759.5 486.5L759.5 486.5L759.5 527.5L759.5 503.5L760.5 515.5L760.5 497.5L760.5 527.5L760.5 515.5L761.5 499.5L761.5 489.5L761.5 552.5L761.5 506.5L762.5 514.5L762.5 524.5L762.5 491.5L762.5 506.5L763.5 497.5L763.5 536.5L763.5 487.5L763.5 504.5L764.5 494.5L764.5 494.5L764.5 533.5L764.5 504.5L765.5 500.5L765.5 496.5L765.5 519.5L765.5 507.5L766.5 541.5L766.5 541.5L766.5 492.5L766.5 510.5L767.5 500.5L767.5 514.5L767.5 490.5L767.5 504.5L768.5 514.5L768.5 491.5L768.5 523.5L768.5 496.5L769.5 503.5L769.5 486.5L769.5 533.5L769.5 533.5L770.5 507.5L770.5 509.5L770.5 487.5L770.5 487.5L771.5 548.5L771.5 548.5L771.5 487.5L771.5 506.5L772.5 502.5L772.5 497.5L772.5 521.5L772.5 521.5L773.5 506.5L773.5 495.5L773.5 522.5L773.5 506.5L774.5 495.5L774.5 495.5L774.5 517.5L774.5 499.5L775.5 508.5L775.5 524.5L775.5 491.5L775.5 523.5L776.5 502.5L776.5 526.5L776.5 500.5L776.5 505.5L777.5 506.5L777.5 488.5L777.5 521.5L777.5 510.5L778.5 510.5L778.5 501.5L778.5 528.5L778.5 528.5L779.5 500.5L779.5 518.5L779.5 495.5L779.5 501.5L780.5 510.5L780.5 485.5L780.5 543.5L780.5 508.5L781.5 515.5L781.5 527.5L781.5 493.5L781.5 507.5L782.5 511.5L782.5 486.5L782.5 521.5L782.5 519.5L783.5 515.5L783.5 547.5L783.5 485.5L783.5 523.5L784.5 523.5L784.5 493.5L784.5 531.5L784.5 513.5L785.5 488.5L785.5 488.5L785.5 554.5L785.5 511.5L786.5 502.5L786.5 519.5L786.5 492.5L786.5 492.5L787.5 516.5L787.5 516.5L787.5 491.5L787.5 501.5L788.5 501.5L788.5 529.5L788.5 486.5L788.5 496.5L789.5 506.5L789.5 494.5L789.5 526.5L789.5 506.5L790.5 507.5L790.5 542.5L790.5 486.5L790.5 505.5L791.5 518.5L791.5 488.5L791.5 525.5L791.5 508.5L792.5 512.5L792.5 494.5L792.5 558.5L792.5 504.5L793.5 531.5L793.5 491.5L793.5 535.5L793.5 505.5L794.5 512.5L794.5 492.5L794.5 533.5L794.5 533.5L795.5 537.5L795.5 489.5L795.5 540.5L795.5 497.5L796.5 498.5L796.5 488.5L796.5 532.5L796.5 512.5L797.5 501.5L797.5 513.5L797.5 494.5L797.5 494.5L798.5 533.5L798.5 533.5L798.5 491.5L798.5 498.5L799.5 509.5L799.5 545.5L799.5 495.5L799.5 519.5L800.5 541.5L800.5 541.5L800.5 493.5L800.5 506.5L801.5 505.5L801.5 538.5L801.5 494.5L801.5 505.5L802.5 510.5L802.5 495.5L802.5 545.5L802.5 500.5L803.5 524.5L803.5 488.5L803.5 538.5L803.5 538.5L804.5 526.5L804.5 526.5L804.5 501.5L804.5 510.5L805.5 499.5L805.5 491.5L805.5 520.5L805.5 520.5L806.5 501.5L806.5 486.5L806.5 514.5L806.5 508.5L807.5 518.5L807.5 491.5L807.5 552.5L807.5 552.5L808.5 508.5L808.5 533.5L808.5 496.5L808.5 526.5L809.5 505.5L809.5 492.5L809.5 517.5L809.5 517.5L810.5 496.5L810.5 493.5L810.5 521.5L810.5 496.5L811.5 501.5L811.5 539.5L811.5 492.5L811.5 498.5L812.5 499.5L812.5 519.5L812.5 479.5L812.5 508.5L813.5 511.5L813.5 480.5L813.5 517.5L813.5 503.5L814.5 522.5L814.5 522.5L814.5 486.5L814.5 510.5L815.5 518.5L815.5 489.5L815.5 523.5L815.5 499.5L816.5 502.5L816.5 526.5L816.5 492.5L816.5 512.5L817.5 506.5L817.5 495.5L817.5 531.5L817.5 506.5L818.5 512.5L818.5 486.5L818.5 516.5L818.5 516.5L819.5 518.5L819.5 518.5L819.5 499.5L819.5 499.5L820.5 491.5L820.5 527.5L820.5 487.5L820.5 511.5L821.5 505.5L821.5 552.5L821.5 487.5L821.5 490.5L822.5 490.5L822.5 490.5L822.5 548.5L822.5 499.5L823.5 499.5L823.5 490.5L823.5 535.5L823.5 515.5L824.5 508.5L824.5 519.5L824.5 488.5L824.5 488.5L825.5 498.5L825.5 531.5L825.5 487.5L825.5 496.5L826.5 496.5L826.5 531.5L826.5 488.5L826.5 510.5L827.5 493.5L827.5 523.5L827.5 489.5L827.5 511.5L828.5 501.5L828.5 554.5L828.5 492.5L828.5 496.5L829.5 515.5L829.5 532.5L829.5 491.5L829.5 525.5L830.5 504.5L830.5 486.5L830.5 513.5L830.5 511.5L831.5 504.5L831.5 536.5L831.5 487.5L831.5 500.5L832.5 497.5L832.5 492.5L832.5 527.5L832.5 493.5L833.5 504.5L833.5 483.5L833.5 513.5L833.5 504.5L834.5 500.5L834.5 562.5L834.5 495.5L834.5 525.5L835.5 497.5L835.5 519.5L835.5 491.5L835.5 491.5L836.5 494.5L836.5 540.5L836.5 489.5L836.5 536.5L837.5 493.5L837.5 487.5L837.5 525.5L837.5 516.5L838.5 503.5L838.5 516.5L838.5 488.5L838.5 501.5L839.5 520.5L839.5 520.5L839.5 494.5L839.5 497.5L840.5 517.5L840.5 481.5L840.5 536.5L840.5 536.5L841.5 514.5L841.5 540.5L841.5 489.5L841.5 511.5L842.5 495.5L842.5 515.5L842.5 490.5L842.5 514.5L843.5 500.5L843.5 560.5L843.5 489.5L843.5 502.5L844.5 513.5L844.5 494.5L844.5 522.5L844.5 507.5L845.5 500.5L845.5 537.5L845.5 488.5L845.5 500.5L846.5 490.5L846.5 485.5L846.5 543.5L846.5 503.5L847.5 519.5L847.5 519.5L847.5 487.5L847.5 504.5L848.5 497.5L848.5 491.5L848.5 534.5L848.5 496.5L849.5 489.5L849.5 518.5L849.5 489.5L849.5 502.5L850.5 505.5L850.5 493.5L850.5 527.5L850.5 521.5L851.5 490.5L851.5 489.5L851.5 525.5L851.5 498.5L852.5 508.5L852.5 486.5L852.5 532.5L852.5 499.5L853.5 506.5L853.5 518.5L853.5 493.5L853.5 515.5L854.5 498.5L854.5 524.5L854.5 490.5L854.5 504.5L855.5 495.5L855.5 521.5L855.5 487.5L855.5 487.5L856.5 488.5L856.5 531.5L856.5 488.5L856.5 492.5L857.5 492.5L857.5 531.5L857.5 484.5L857.5 506.5L858.5 502.5L858.5 493.5L858.5 521.5L858.5 505.5L859.5 514.5L859.5 490.5L859.5 533.5L859.5 494.5L860.5 490.5L860.5 487.5L860.5 532.5L860.5 511.5L861.5 506.5L861.5 523.5L861.5 488.5L861.5 510.5L862.5 495.5L862.5 493.5L862.5 521.5L862.5 501.5L863.5 506.5L863.5 494.5L863.5 518.5L863.5 502.5L864.5 502.5L864.5 563.5L864.5 488.5L864.5 505.5L865.5 507.5L865.5 485.5L865.5 527.5L865.5 511.5L866.5 496.5L866.5 485.5L866.5 525.5L866.5 513.5L867.5 491.5L867.5 537.5L867.5 484.5L867.5 493.5L868.5 507.5L868.5 534.5L868.5 485.5L868.5 526.5L869.5 504.5L869.5 529.5L869.5 487.5L869.5 501.5L870.5 492.5L870.5 538.5L870.5 486.5L870.5 506.5L871.5 537.5L871.5 537.5L871.5 492.5L871.5 506.5L872.5 513.5L872.5 487.5L872.5 529.5L872.5 529.5L873.5 483.5L873.5 483.5L873.5 517.5L873.5 499.5L874.5 508.5L874.5 550.5L874.5 482.5L874.5 485.5L875.5 503.5L875.5 516.5L875.5 490.5L875.5 490.5L876.5 496.5L876.5 534.5L876.5 493.5L876.5 499.5L877.5 506.5L877.5 493.5L877.5 523.5L877.5 512.5L878.5 506.5L878.5 487.5L878.5 530.5L878.5 509.5L879.5 498.5L879.5 487.5L879.5 520.5L879.5 520.5L880.5 499.5L880.5 544.5L880.5 494.5L880.5 525.5L881.5 500.5L881.5 536.5L881.5 486.5L881.5 498.5L882.5 494.5L882.5 536.5L882.5 488.5L882.5 516.5L883.5 529.5L883.5 529.5L883.5 496.5L883.5 517.5L884.5 522.5L884.5 490.5L884.5 530.5L884.5 530.5L885.5 533.5L885.5 533.5L885.5 486.5L885.5 505.5L886.5 505.5L886.5 520.5L886.5 485.5L886.5 485.5L887.5 513.5L887.5 513.5L887.5 484.5L887.5 505.5L888.5 516.5L888.5 532.5L888.5 489.5L888.5 497.5L889.5 494.5L889.5 531.5L889.5 494.5L889.5 526.5L890.5 510.5L890.5 537.5L890.5 497.5L890.5 513.5L891.5 522.5L891.5 487.5L891.5 553.5L891.5 494.5L892.5 506.5L892.5 530.5L892.5 489.5L892.5 519.5L893.5 510.5L893.5 521.5L893.5 486.5L893.5 509.5L894.5 529.5L894.5 536.5L894.5 491.5L894.5 498.5L895.5 544.5L895.5 544.5L895.5 486.5L895.5 514.5L896.5 498.5L896.5 483.5L896.5 525.5L896.5 501.5L897.5 515.5L897.5 527.5L897.5 486.5L897.5 502.5L898.5 502.5L898.5 527.5L898.5 495.5L898.5 495.5L899.5 503.5L899.5 484.5L899.5 533.5L899.5 516.5L900.5 492.5L900.5 525.5L900.5 484.5L900.5 496.5L901.5 521.5L901.5 522.5L901.5 485.5L901.5 498.5L902.5 503.5L902.5 483.5L902.5 536.5L902.5 504.5L903.5 510.5L903.5 537.5L903.5 495.5L903.5 500.5L904.5 499.5L904.5 534.5L904.5 491.5L904.5 513.5L905.5 494.5L905.5 523.5L905.5 486.5L905.5 498.5L906.5 502.5L906.5 497.5L906.5 534.5L906.5 506.5L907.5 523.5L907.5 489.5L907.5 544.5L907.5 515.5L908.5 502.5L908.5 521.5L908.5 484.5L908.5 505.5L909.5 506.5L909.5 485.5L909.5 532.5L909.5 506.5L910.5 503.5L910.5 524.5L910.5 482.5L910.5 508.5L911.5 519.5L911.5 583.5L911.5 488.5L911.5 511.5L912.5 504.5L912.5 487.5L912.5 531.5L912.5 492.5L913.5 526.5L913.5 526.5L913.5 486.5L913.5 504.5L914.5 496.5L914.5 481.5L914.5 514.5L914.5 513.5L915.5 486.5L915.5 486.5L915.5 525.5L915.5 508.5L916.5 510.5L916.5 494.5L916.5 539.5L916.5 500.5L917.5 498.5L917.5 524.5L917.5 488.5L917.5 488.5L918.5 524.5L918.5 524.5L918.5 483.5L918.5 505.5L919.5 497.5L919.5 491.5L919.5 545.5L919.5 500.5L920.5 512.5L920.5 529.5L920.5 490.5L920.5 504.5L921.5 490.5L921.5 490.5L921.5 525.5L921.5 506.5L922.5 498.5L922.5 485.5L922.5 553.5L922.5 553.5L923.5 511.5L923.5 531.5L923.5 489.5L923.5 510.5L924.5 495.5L924.5 489.5L924.5 543.5L924.5 537.5L925.5 504.5L925.5 537.5L925.5 484.5L925.5 506.5L926.5 510.5L926.5 481.5L926.5 525.5L926.5 519.5L927.5 521.5L927.5 546.5L927.5 494.5L927.5 509.5L928.5 509.5L928.5 532.5L928.5 486.5L928.5 499.5L929.5 512.5L929.5 538.5L929.5 486.5L929.5 511.5L930.5 500.5L930.5 484.5L930.5 533.5L930.5 501.5L931.5 518.5L931.5 483.5L931.5 530.5L931.5 520.5L932.5 512.5L932.5 487.5L932.5 542.5L932.5 509.5L933.5 502.5L933.5 486.5L933.5 516.5L933.5 515.5L934.5 486.5L934.5 486.5L934.5 528.5L934.5 511.5L935.5 519.5L935.5 542.5L935.5 484.5L935.5 510.5L936.5 534.5L936.5 542.5L936.5 485.5L936.5 498.5L937.5 512.5L937.5 491.5L937.5 515.5L937.5 494.5L938.5 505.5L938.5 491.5L938.5 534.5L938.5 533.5L939.5 497.5L939.5 484.5L939.5 528.5L939.5 487.5L940.5 528.5L940.5 528.5L940.5 485.5L940.5 507.5L941.5 498.5L941.5 493.5L941.5 537.5L941.5 509.5L942.5 507.5L942.5 544.5L942.5 484.5L942.5 502.5L943.5 530.5L943.5 530.5L943.5 483.5L943.5 496.5L944.5 518.5L944.5 554.5L944.5 482.5L944.5 523.5L945.5 497.5L945.5 542.5L945.5 489.5L945.5 504.5L946.5 500.5L946.5 490.5L946.5 526.5L946.5 497.5L947.5 529.5L947.5 485.5L947.5 543.5L947.5 513.5L948.5 522.5L948.5 552.5L948.5 490.5L948.5 512.5L949.5 499.5L949.5 491.5L949.5 545.5L949.5 504.5L950.5 492.5L950.5 490.5L950.5 534.5L950.5 493.5L951.5 505.5L951.5 535.5L951.5 484.5L951.5 519.5L952.5 502.5L952.5 543.5L952.5 479.5L952.5 512.5L953.5 522.5L953.5 522.5L953.5 490.5L953.5 490.5L954.5 510.5L954.5 533.5L954.5 490.5L954.5 507.5L955.5 486.5L955.5 482.5L955.5 523.5L955.5 485.5L956.5 499.5L956.5 540.5L956.5 480.5L956.5 490.5L957.5 484.5L957.5 484.5L957.5 535.5L957.5 509.5L958.5 522.5L958.5 530.5L958.5 494.5L958.5 515.5L959.5 525.5L959.5 525.5L959.5 488.5L959.5 491.5L960.5 498.5L960.5 547.5L960.5 488.5L960.5 488.5L961.5 484.5L961.5 484.5L961.5 533.5L961.5 507.5L962.5 516.5L962.5 487.5L962.5 556.5L962.5 511.5L963.5 498.5L963.5 529.5L963.5 484.5L963.5 510.5L964.5 507.5L964.5 552.5L964.5 492.5L964.5 528.5L965.5 494.5L965.5 482.5L965.5 540.5L965.5 499.5L966.5 529.5L966.5 484.5L966.5 531.5L966.5 503.5L967.5 494.5L967.5 530.5L967.5 487.5L967.5 495.5L968.5 493.5L968.5 488.5L968.5 526.5L968.5 504.5L969.5 500.5L969.5 547.5L969.5 494.5L969.5 497.5L970.5 498.5L970.5 485.5L970.5 553.5L970.5 518.5L971.5 500.5L971.5 540.5L971.5 482.5L971.5 502.5L972.5 495.5L972.5 482.5L972.5 552.5L972.5 497.5L973.5 504.5L973.5 537.5L973.5 485.5L973.5 485.5L974.5 498.5L974.5 484.5L974.5 590.5L974.5 520.5L975.5 534.5L975.5 489.5L975.5 540.5L975.5 526.5L976.5 517.5L976.5 562.5L976.5 484.5L976.5 518.5L977.5 486.5L977.5 486.5L977.5 536.5L977.5 493.5L978.5 502.5L978.5 526.5L978.5 488.5L978.5 511.5L979.5 503.5L979.5 486.5L979.5 535.5L979.5 511.5L980.5 505.5L980.5 487.5L980.5 532.5L980.5 509.5L981.5 515.5L981.5 524.5L981.5 487.5L981.5 489.5L982.5 504.5L982.5 486.5L982.5 542.5L982.5 492.5L983.5 497.5L983.5 542.5L983.5 482.5L983.5 504.5L984.5 498.5L984.5 488.5L984.5 541.5L984.5 498.5L985.5 512.5L985.5 488.5L985.5 543.5L985.5 512.5L986.5 517.5L986.5 546.5L986.5 487.5L986.5 489.5L987.5 492.5L987.5 534.5L987.5 488.5L987.5 527.5L988.5 514.5L988.5 529.5L988.5 483.5L988.5 495.5L989.5 526.5L989.5 484.5L989.5 531.5L989.5 507.5L990.5 499.5L990.5 482.5L990.5 532.5L990.5 516.5L991.5 509.5L991.5 547.5L991.5 486.5L991.5 512.5L992.5 497.5L992.5 523.5L992.5 486.5L992.5 522.5L993.5 500.5L993.5 522.5L993.5 489.5L993.5 511.5L994.5 490.5L994.5 540.5L994.5 486.5L994.5 513.5L995.5 493.5L995.5 478.5L995.5 534.5L995.5 511.5L996.5 508.5L996.5 482.5L996.5 536.5L996.5 498.5L997.5 507.5L997.5 486.5L997.5 523.5L997.5 498.5L998.5 555.5L998.5 555.5L998.5 482.5L998.5 490.5L999.5 507.5L999.5 522.5L999.5 492.5L999.5 500.5L1000.5 492.5L1000.5 543.5L1000.5 484.5L1000.5 504.5L1001.5 495.5L1001.5 482.5L1001.5 553.5L1001.5 507.5L1002.5 512.5L1002.5 529.5L1002.5 484.5L1002.5 512.5L1003.5 524.5L1003.5 488.5L1003.5 539.5L1003.5 501.5L1004.5 514.5L1004.5 536.5L1004.5 488.5L1004.5 503.5L1005.5 515.5L1005.5 486.5L1005.5 531.5L1005.5 509.5L1006.5 518.5L1006.5 537.5L1006.5 488.5L1006.5 530.5L1007.5 506.5L1007.5 547.5L1007.5 487.5L1007.5 508.5L1008.5 511.5L1008.5 524.5L1008.5 483.5L1008.5 518.5L1009.5 537.5L1009.5 546.5L1009.5 483.5L1009.5 489.5L1010.5 533.5L1010.5 533.5L1010.5 486.5L1010.5 509.5L1011.5 520.5L1011.5 546.5L1011.5 490.5L1011.5 513.5L1012.5 512.5L1012.5 486.5L1012.5 544.5L1012.5 513.5L1013.5 505.5L1013.5 488.5L1013.5 533.5L1013.5 517.5L1014.5 513.5L1014.5 483.5L1014.5 539.5L1014.5 497.5L1015.5 533.5L1015.5 545.5L1015.5 487.5L1015.5 506.5L1016.5 496.5L1016.5 486.5L1016.5 543.5L1016.5 494.5L1017.5 496.5L1017.5 489.5L1017.5 540.5L1017.5 540.5L1018.5 490.5L1018.5 538.5L1018.5 483.5L1018.5 497.5L1019.5 505.5L1019.5 484.5L1019.5 535.5L1019.5 522.5L1020.5 547.5L1020.5 552.5L1020.5 489.5L1020.5 501.5L1021.5 502.5L1021.5 538.5L1021.5 487.5L1021.5 501.5L1022.5 488.5L1022.5 483.5L1022.5 574.5L1022.5 499.5L1023.5 488.5L1023.5 486.5L1023.5 549.5L1023.5 531.5L1024.5 490.5L1024.5 488.5L1024.5 551.5L1024.5 497.5L1025.5 497.5L1025.5 489.5L1025.5 590.5L1025.5 514.5L1026.5 492.5L1026.5 482.5L1026.5 535.5L1026.5 501.5L1027.5 498.5L1027.5 537.5L1027.5 489.5L1027.5 493.5L1028.5 478.5L1028.5 478.5L1028.5 523.5L1028.5 496.5L1029.5 498.5L1029.5 530.5L1029.5 484.5L1029.5 507.5L1030.5 512.5L1030.5 486.5L1030.5 557.5L1030.5 504.5L1031.5 512.5L1031.5 557.5L1031.5 485.5L1031.5 519.5L1032.5 495.5L1032.5 534.5L1032.5 484.5L1032.5 507.5L1033.5 485.5L1033.5 540.5L1033.5 482.5L1033.5 491.5L1034.5 498.5L1034.5 544.5L1034.5 484.5L1034.5 511.5L1035.5 521.5L1035.5 548.5L1035.5 493.5L1035.5 503.5L1036.5 497.5L1036.5 532.5L1036.5 484.5L1036.5 493.5L1037.5 519.5L1037.5 484.5L1037.5 529.5L1037.5 507.5L1038.5 491.5L1038.5 483.5L1038.5 547.5L1038.5 516.5L1039.5 502.5L1039.5 490.5L1039.5 536.5L1039.5 497.5L1040.5 506.5L1040.5 483.5L1040.5 529.5L1040.5 497.5L1041.5 520.5L1041.5 483.5L1041.5 546.5L1041.5 518.5L1042.5 502.5L1042.5 490.5L1042.5 527.5L1042.5 512.5L1043.5 508.5L1043.5 491.5L1043.5 549.5L1043.5 521.5L1044.5 501.5L1044.5 482.5L1044.5 557.5L1044.5 514.5L1045.5 499.5L1045.5 531.5L1045.5 487.5L1045.5 511.5L1046.5 492.5L1046.5 531.5L1046.5 481.5L1046.5 503.5L1047.5 499.5L1047.5 486.5L1047.5 544.5L1047.5 504.5L1048.5 510.5L1048.5 536.5L1048.5 485.5L1048.5 497.5L1049.5 501.5L1049.5 487.5L1049.5 532.5L1049.5 520.5L1050.5 491.5L1050.5 538.5L1050.5 487.5L1050.5 497.5L1051.5 503.5L1051.5 484.5L1051.5 535.5L1051.5 492.5L1052.5 511.5L1052.5 482.5L1052.5 574.5L1052.5 517.5L1053.5 509.5L1053.5 487.5L1053.5 540.5L1053.5 528.5L1054.5 509.5L1054.5 535.5L1054.5 485.5L1054.5 533.5L1055.5 502.5L1055.5 483.5L1055.5 540.5L1055.5 503.5L1056.5 488.5L1056.5 481.5L1056.5 532.5L1056.5 495.5L1057.5 499.5L1057.5 528.5L1057.5 487.5L1057.5 487.5L1058.5 513.5L1058.5 537.5L1058.5 488.5L1058.5 512.5L1059.5 504.5L1059.5 487.5L1059.5 547.5L1059.5 504.5L1060.5 502.5L1060.5 563.5L1060.5 484.5L1060.5 502.5L1061.5 502.5L1061.5 484.5L1061.5 566.5L1061.5 503.5L1062.5 511.5L1062.5 489.5L1062.5 534.5L1062.5 505.5L1063.5 504.5L1063.5 561.5L1063.5 487.5L1063.5 499.5L1064.5 492.5L1064.5 484.5L1064.5 531.5L1064.5 497.5L1065.5 486.5L1065.5 484.5L1065.5 539.5L1065.5 512.5L1066.5 515.5L1066.5 487.5L1066.5 551.5L1066.5 496.5L1067.5 513.5L1067.5 492.5L1067.5 531.5L1067.5 518.5L1068.5 498.5L1068.5 489.5L1068.5 531.5L1068.5 531.5L1069.5 498.5L1069.5 486.5L1069.5 536.5L1069.5 495.5L1070.5 509.5L1070.5 534.5L1070.5 481.5L1070.5 491.5L1071.5 518.5L1071.5 484.5L1071.5 549.5L1071.5 515.5L1072.5 514.5L1072.5 558.5L1072.5 486.5L1072.5 498.5L1073.5 510.5L1073.5 484.5L1073.5 542.5L1073.5 542.5L1074.5 503.5L1074.5 484.5L1074.5 537.5L1074.5 502.5L1075.5 502.5L1075.5 541.5L1075.5 487.5L1075.5 504.5L1076.5 507.5L1076.5 539.5L1076.5 482.5L1076.5 505.5L1077.5 517.5L1077.5 534.5L1077.5 483.5L1077.5 503.5L1078.5 493.5L1078.5 486.5L1078.5 538.5L1078.5 499.5L1079.5 497.5L1079.5 545.5L1079.5 487.5L1079.5 500.5L1080.5 497.5L1080.5 484.5L1080.5 537.5L1080.5 516.5L1081.5 507.5L1081.5 562.5L1081.5 480.5L1081.5 491.5L1082.5 508.5L1082.5 537.5L1082.5 485.5L1082.5 501.5L1083.5 493.5L1083.5 547.5L1083.5 489.5L1083.5 539.5L1084.5 523.5L1084.5 549.5L1084.5 487.5L1084.5 515.5L1085.5 513.5L1085.5 486.5L1085.5 543.5L1085.5 502.5L1086.5 484.5L1086.5 484.5L1086.5 539.5L1086.5 495.5L1087.5 501.5L1087.5 478.5L1087.5 536.5L1087.5 515.5L1088.5 500.5L1088.5 484.5L1088.5 533.5L1088.5 508.5L1089.5 508.5L1089.5 540.5L1089.5 488.5L1089.5 501.5L1090.5 507.5L1090.5 491.5L1090.5 535.5L1090.5 499.5L1091.5 523.5L1091.5 545.5L1091.5 489.5L1091.5 494.5L1092.5 509.5L1092.5 550.5L1092.5 487.5L1092.5 513.5L1093.5 520.5L1093.5 566.5L1093.5 484.5L1093.5 497.5L1094.5 499.5L1094.5 482.5L1094.5 581.5L1094.5 492.5L1095.5 511.5L1095.5 549.5L1095.5 480.5L1095.5 496.5L1096.5 503.5L1096.5 546.5L1096.5 483.5L1096.5 497.5L1097.5 523.5L1097.5 483.5L1097.5 535.5L1097.5 512.5L1098.5 518.5L1098.5 544.5L1098.5 481.5L1098.5 488.5L1099.5 489.5L1099.5 547.5L1099.5 482.5L1099.5 497.5L1100.5 511.5L1100.5 549.5L1100.5 483.5L1100.5 517.5L1101.5 520.5L1101.5 546.5L1101.5 485.5L1101.5 499.5L1102.5 510.5L1102.5 542.5L1102.5 483.5L1102.5 484.5L1103.5 501.5L1103.5 486.5L1103.5 553.5L1103.5 520.5L1104.5 513.5L1104.5 488.5L1104.5 551.5L1104.5 505.5L1105.5 506.5L1105.5 540.5L1105.5 483.5L1105.5 495.5L1106.5 506.5L1106.5 486.5L1106.5 544.5L1106.5 517.5L1107.5 501.5L1107.5 534.5L1107.5 483.5L1107.5 506.5L1108.5 512.5L1108.5 548.5L1108.5 479.5L1108.5 501.5L1109.5 515.5L1109.5 537.5L1109.5 485.5L1109.5 495.5L1110.5 510.5L1110.5 549.5L1110.5 489.5L1110.5 515.5L1111.5 521.5L1111.5 488.5L1111.5 543.5L1111.5 531.5L1112.5 506.5L1112.5 487.5L1112.5 543.5L1112.5 488.5L1113.5 490.5L1113.5 483.5L1113.5 556.5L1113.5 493.5L1114.5 495.5L1114.5 485.5L1114.5 536.5L1114.5 507.5L1115.5 499.5L1115.5 485.5L1115.5 545.5L1115.5 497.5L1116.5 492.5L1116.5 486.5L1116.5 550.5L1116.5 550.5L1117.5 521.5L1117.5 485.5L1117.5 551.5L1117.5 518.5L1118.5 510.5L1118.5 558.5L1118.5 485.5L1118.5 506.5L1119.5 513.5L1119.5 558.5L1119.5 484.5L1119.5 500.5L1120.5 519.5L1120.5 490.5L1120.5 560.5L1120.5 500.5L1121.5 515.5L1121.5 483.5L1121.5 546.5L1121.5 531.5L1122.5 509.5L1122.5 549.5L1122.5 487.5L1122.5 500.5L1123.5 490.5L1123.5 539.5L1123.5 483.5L1123.5 514.5L1124.5 528.5L1124.5 483.5L1124.5 547.5L1124.5 489.5L1125.5 498.5L1125.5 488.5L1125.5 562.5L1125.5 511.5L1126.5 517.5L1126.5 483.5L1126.5 542.5L1126.5 511.5L1127.5 511.5L1127.5 486.5L1127.5 544.5L1127.5 504.5L1128.5 498.5L1128.5 486.5L1128.5 556.5L1128.5 503.5L1129.5 495.5L1129.5 484.5L1129.5 550.5L1129.5 504.5L1130.5 502.5L1130.5 489.5L1130.5 557.5L1130.5 508.5L1131.5 512.5L1131.5 548.5L1131.5 486.5L1131.5 502.5L1132.5 513.5L1132.5 560.5L1132.5 484.5L1132.5 509.5L1133.5 534.5L1133.5 541.5L1133.5 483.5L1133.5 522.5L1134.5 520.5L1134.5 486.5L1134.5 551.5L1134.5 496.5L1135.5 496.5L1135.5 569.5L1135.5 483.5L1135.5 516.5L1136.5 503.5L1136.5 542.5L1136.5 486.5L1136.5 497.5L1137.5 508.5L1137.5 556.5L1137.5 488.5L1137.5 489.5L1138.5 519.5L1138.5 487.5L1138.5 540.5L1138.5 540.5L1139.5 500.5L1139.5 485.5L1139.5 571.5L1139.5 495.5L1140.5 544.5L1140.5 490.5L1140.5 590.5L1140.5 499.5L1141.5 508.5L1141.5 533.5L1141.5 485.5L1141.5 497.5L1142.5 505.5L1142.5 479.5L1142.5 566.5L1142.5 516.5L1143.5 500.5L1143.5 543.5L1143.5 486.5L1143.5 493.5L1144.5 491.5L1144.5 539.5L1144.5 486.5L1144.5 515.5L1145.5 516.5L1145.5 488.5L1145.5 552.5L1145.5 493.5L1146.5 516.5L1146.5 487.5L1146.5 569.5L1146.5 509.5L1147.5 502.5L1147.5 483.5L1147.5 538.5L1147.5 514.5L1148.5 511.5L1148.5 541.5L1148.5 485.5L1148.5 508.5L1149.5 494.5L1149.5 557.5L1149.5 481.5L1149.5 501.5L1150.5 490.5L1150.5 490.5L1150.5 564.5L1150.5 519.5L1151.5 514.5L1151.5 484.5L1151.5 579.5L1151.5 494.5L1152.5 496.5L1152.5 541.5L1152.5 487.5L1152.5 509.5L1153.5 503.5L1153.5 484.5L1153.5 550.5L1153.5 498.5L1154.5 485.5L1154.5 540.5L1154.5 483.5L1154.5 500.5L1155.5 513.5L1155.5 546.5L1155.5 486.5L1155.5 513.5L1156.5 493.5L1156.5 479.5L1156.5 539.5L1156.5 502.5L1157.5 494.5L1157.5 478.5L1157.5 590.5L1157.5 525.5L1158.5 503.5L1158.5 485.5L1158.5 543.5L1158.5 496.5L1159.5 505.5L1159.5 484.5L1159.5 548.5L1159.5 506.5L1160.5 507.5L1160.5 546.5L1160.5 488.5L1160.5 517.5L1161.5 504.5L1161.5 545.5L1161.5 483.5L1161.5 518.5L1162.5 501.5L1162.5 488.5L1162.5 575.5L1162.5 504.5L1163.5 527.5L1163.5 485.5L1163.5 544.5L1163.5 510.5L1164.5 479.5L1164.5 479.5L1164.5 579.5L1164.5 489.5L1165.5 509.5L1165.5 482.5L1165.5 549.5L1165.5 494.5L1166.5 517.5L1166.5 581.5L1166.5 485.5L1166.5 506.5L1167.5 509.5L1167.5 480.5L1167.5 537.5L1167.5 504.5L1168.5 493.5L1168.5 549.5L1168.5 484.5L1168.5 508.5L1169.5 499.5L1169.5 480.5L1169.5 579.5L1169.5 516.5L1170.5 489.5L1170.5 544.5L1170.5 484.5L1170.5 494.5L1171.5 502.5L1171.5 546.5L1171.5 481.5L1171.5 540.5L1172.5 503.5L1172.5 480.5L1172.5 534.5L1172.5 508.5L1173.5 502.5L1173.5 549.5L1173.5 487.5L1173.5 505.5L1174.5 523.5L1174.5 560.5L1174.5 484.5L1174.5 546.5L1175.5 510.5L1175.5 544.5L1175.5 481.5L1175.5 506.5L1176.5 490.5L1176.5 572.5L1176.5 481.5L1176.5 507.5L1177.5 506.5L1177.5 534.5L1177.5 486.5L1177.5 491.5L1178.5 507.5L1178.5 546.5L1178.5 484.5L1178.5 510.5L1179.5 500.5L1179.5 547.5L1179.5 483.5L1179.5 496.5L1180.5 494.5L1180.5 589.5L1180.5 484.5L1180.5 507.5L1181.5 515.5L1181.5 562.5L1181.5 477.5L1181.5 518.5L1182.5 510.5L1182.5 479.5L1182.5 559.5L1182.5 497.5L1183.5 498.5L1183.5 544.5L1183.5 482.5L1183.5 527.5L1184.5 503.5L1184.5 548.5L1184.5 484.5L1184.5 507.5L1185.5 509.5L1185.5 484.5L1185.5 561.5L1185.5 534.5L1186.5 508.5L1186.5 487.5L1186.5 538.5L1186.5 492.5L1187.5 509.5L1187.5 560.5L1187.5 483.5L1187.5 483.5L1188.5 489.5L1188.5 482.5L1188.5 546.5L1188.5 510.5L1189.5 522.5L1189.5 577.5L1189.5 486.5L1189.5 515.5L1190.5 495.5L1190.5 480.5L1190.5 549.5L1190.5 508.5L1191.5 490.5L1191.5 486.5L1191.5 544.5L1191.5 488.5L1192.5 515.5L1192.5 549.5L1192.5 483.5L1192.5 501.5L1193.5 495.5L1193.5 479.5L1193.5 554.5L1193.5 490.5L1194.5 509.5L1194.5 560.5L1194.5 480.5L1194.5 499.5L1195.5 496.5L1195.5 546.5L1195.5 483.5L1195.5 539.5L1196.5 509.5L1196.5 553.5L1196.5 481.5L1196.5 505.5L1197.5 507.5L1197.5 548.5L1197.5 482.5L1197.5 513.5L1198.5 502.5L1198.5 481.5L1198.5 534.5L1198.5 499.5L1199.5 501.5L1199.5 544.5L1199.5 484.5L1199.5 506.5L1200.5 510.5L1200.5 546.5L1200.5 487.5L1200.5 524.5L1201.5 497.5L1201.5 568.5L1201.5 483.5L1201.5 503.5L1202.5 505.5L1202.5 484.5L1202.5 558.5L1202.5 500.5L1203.5 525.5L1203.5 561.5L1203.5 484.5L1203.5 520.5L1204.5 501.5L1204.5 479.5L1204.5 538.5L1204.5 503.5L1205.5 507.5L1205.5 540.5L1205.5 487.5L1205.5 513.5L1206.5 505.5L1206.5 484.5L1206.5 553.5L1206.5 502.5L1207.5 523.5L1207.5 551.5L1207.5 488.5L1207.5 543.5L1208.5 504.5L1208.5 551.5L1208.5 485.5L1208.5 504.5L1209.5 507.5L1209.5 580.5L1209.5 485.5L1209.5 509.5L1210.5 508.5L1210.5 485.5L1210.5 565.5L1210.5 501.5L1211.5 502.5L1211.5 542.5L1211.5 484.5L1211.5 488.5L1212.5 517.5L1212.5 550.5L1212.5 483.5L1212.5 495.5L1213.5 503.5L1213.5 485.5L1213.5 540.5L1213.5 511.5L1214.5 516.5L1214.5 480.5L1214.5 558.5L1214.5 508.5L1215.5 492.5L1215.5 477.5L1215.5 565.5L1215.5 504.5L1216.5 515.5L1216.5 475.5L1216.5 551.5L1216.5 492.5L1217.5 528.5L1217.5 548.5L1217.5 481.5L1217.5 492.5L1218.5 492.5L1218.5 484.5L1218.5 554.5L1218.5 491.5L1219.5 508.5L1219.5 484.5L1219.5 554.5L1219.5 535.5L1220.5 497.5L1220.5 485.5L1220.5 546.5L1220.5 497.5L1221.5 510.5L1221.5 567.5L1221.5 485.5L1221.5 515.5L1222.5 518.5L1222.5 482.5L1222.5 571.5L1222.5 516.5L1223.5 502.5L1223.5 554.5L1223.5 484.5L1223.5 505.5L1224.5 516.5L1224.5 570.5L1224.5 484.5L1224.5 517.5L1225.5 521.5L1225.5 480.5L1225.5 577.5L1225.5 501.5L1226.5 502.5L1226.5 480.5L1226.5 546.5L1226.5 513.5L1227.5 499.5L1227.5 563.5L1227.5 486.5L1227.5 518.5L1228.5 495.5L1228.5 590.5L1228.5 484.5L1228.5 498.5L1229.5 517.5L1229.5 483.5L1229.5 551.5L1229.5 506.5L1230.5 503.5L1230.5 485.5L1230.5 576.5L1230.5 505.5L1231.5 504.5L1231.5 483.5L1231.5 546.5L1231.5 505.5L1232.5 523.5L1232.5 563.5L1232.5 484.5L1232.5 519.5L1233.5 513.5L1233.5 554.5L1233.5 483.5L1233.5 492.5L1234.5 502.5L1234.5 556.5L1234.5 483.5L1234.5 499.5L1235.5 499.5L1235.5 485.5L1235.5 565.5L1235.5 498.5L1236.5 518.5L1236.5 560.5L1236.5 487.5L1236.5 502.5L1237.5 486.5L1237.5 480.5L1237.5 562.5L1237.5 515.5L1238.5 496.5L1238.5 558.5L1238.5 482.5L1238.5 527.5L1239.5 506.5L1239.5 551.5L1239.5 482.5L1239.5 492.5L1240.5 481.5L1240.5 481.5L1240.5 542.5L1240.5 497.5L1241.5 500.5L1241.5 485.5L1241.5 543.5L1241.5 509.5L1242.5 504.5L1242.5 479.5L1242.5 540.5L1242.5 508.5L1243.5 535.5L1243.5 547.5L1243.5 483.5L1243.5 506.5L1244.5 505.5L1244.5 483.5L1244.5 546.5L1244.5 518.5L1245.5 511.5L1245.5 541.5L1245.5 481.5L1245.5 502.5L1246.5 495.5L1246.5 486.5L1246.5 540.5L1246.5 501.5L1247.5 501.5L1247.5 479.5L1247.5 571.5L1247.5 500.5L1248.5 486.5L1248.5 486.5L1248.5 555.5L1248.5 493.5L1249.5 511.5L1249.5 562.5L1249.5 481.5L1249.5 502.5L1250.5 504.5L1250.5 556.5L1250.5 484.5L1250.5 493.5L1251.5 497.5L1251.5 480.5L1251.5 554.5L1251.5 512.5" stroke="#00ff00" fill="none"/><path d="M733.5 481.5V500.5M734.5 468.5V525.5M735.5 451.5V468.5M736.5 425.5V451.5M737.5 226.5V425.5M738.5 212.5V369.5M739.5 369.5V419.5M740.5 419.5V446.5M741.5 446.5V470.5M742.5 470.5V500.5M743.5 483.5V495.5M1014.5 454.5V495M1072.5 463.5V495M1116.5 451.5V495M1149.5 435.5V495M1203.5 435.5V495M1224.5 458.5V495M1243.5 458.5V495M879.5 477.5V495M677.5 606.5V515M929.5 600.5V515M1046.5 600.5V515M933.5 596.5V515" stroke="#00ff00" fill="none"/>
<path d="M857.5 148V653" stroke="#bebe00"/>
</svg>
<div class="a ui" style="left:1332px;top:102px">Top</div>
<div class="a btn" style="left:1333px;top:120px;width:15px;height:16px"></div>
<svg class="a" style="left:1337px;top:126px" width="7" height="4" shape-rendering="crispEdges"><path d="M3 0h1v1h1v1h1v1h1v1h-7v-1h1v-1h1v-1h1z" fill="#000"/></svg>
<div class="a btn" style="left:1333px;top:137px;width:15px;height:16px"></div>
<svg class="a" style="left:1337px;top:143px" width="7" height="4" shape-rendering="crispEdges"><path d="M0 0h7v1h-1v1h-1v1h-1v1h-1v-1h-1v-1h-1v-1h-1z" fill="#000"/></svg>
<div class="a btn" style="left:1326px;top:164px;width:30px;height:20px"><div class="ui" style="text-align:center;line-height:20px;transform-origin:50% 0">Fit</div></div>
<div class="a ui" style="left:1326px;top:199px">Range</div>
<div class="a btn" style="left:1333px;top:216px;width:15px;height:16px"></div>
<svg class="a" style="left:1337px;top:222px" width="7" height="4" shape-rendering="crispEdges"><path d="M3 0h1v1h1v1h1v1h1v1h-7v-1h1v-1h1v-1h1z" fill="#000"/></svg>
<div class="a btn" style="left:1333px;top:233px;width:15px;height:16px"></div>
<svg class="a" style="left:1337px;top:239px" width="7" height="4" shape-rendering="crispEdges"><path d="M0 0h7v1h-1v1h-1v1h-1v1h-1v-1h-1v-1h-1v-1h-1z" fill="#000"/></svg>
<div class="a btn" style="left:1326px;top:265px;width:30px;height:21px"><div class="ui" style="text-align:center;line-height:21px;transform-origin:50% 0">Set</div></div>
<div class="a ui" style="left:1326px;top:302px">FrHigh</div>
<div class="a btn" style="left:1326px;top:320px;width:14px;height:16px"></div>
<svg class="a" style="left:1331px;top:325px" width="3" height="5" shape-rendering="crispEdges"><path d="M2 0h1v5h-1v-1h-1v-1h-1v-1h1v-1h1z" fill="#000"/></svg>
<div class="a btn" style="left:1341px;top:320px;width:14px;height:16px"></div>
<svg class="a" style="left:1346px;top:325px" width="3" height="5" shape-rendering="crispEdges"><path d="M0 0h1v1h1v1h1v1h-1v1h-1v1h-1z" fill="#000"/></svg>
<div class="a ui" style="left:1328px;top:347px">FrLow</div>
<div class="a btn" style="left:1326px;top:363px;width:14px;height:16px"></div>
<svg class="a" style="left:1331px;top:368px" width="3" height="5" shape-rendering="crispEdges"><path d="M2 0h1v5h-1v-1h-1v-1h-1v-1h1v-1h1z" fill="#000"/></svg>
<div class="a btn" style="left:1341px;top:363px;width:14px;height:16px"></div>
<svg class="a" style="left:1346px;top:368px" width="3" height="5" shape-rendering="crispEdges"><path d="M0 0h1v1h1v1h1v1h-1v1h-1v1h-1z" fill="#000"/></svg>
<div class="a ui" style="left:3px;top:727px">Ready</div>
<div class="a" style="left:1042px;top:724px;width:73px;height:16px;box-shadow:inset 1px 1px #808080,inset -1px -1px #fff"></div>
<div class="a ui" style="left:1048px;top:727px">L:-25.1dB</div>
<div class="a" style="left:1117px;top:724px;width:73px;height:16px;box-shadow:inset 1px 1px #808080,inset -1px -1px #fff"></div>
<div class="a ui" style="left:1123px;top:727px">R:-90.3dB</div>
<div class="a" style="left:1192px;top:724px;width:156px;height:16px;box-shadow:inset 1px 1px #808080,inset -1px -1px #fff"></div>
<div class="a ui" style="left:1198px;top:727px">Spectrum Analyzer</div>
<div class="hl" style="left:0;top:739px;width:1365px;background:#c4c2bc"></div>
<div class="hl" style="left:0;top:740px;width:1365px;background:#5a5a5a"></div>
<svg class="a" style="left:1350px;top:726px" width="15" height="14" shape-rendering="crispEdges"><path d="M3 13L15 1M7 13L15 5M11 13L15 9" stroke="#fff"/><path d="M4 13L15 2M5 13L15 3M8 13L15 6M9 13L15 7M12 13L15 10M13 13L15 11" stroke="#808080"/></svg>
<div class="a" style="left:161px;top:46px;width:31px;height:22px;background-color:#fff;background-image:repeating-conic-gradient(#d4d0c8 0 25%,#fff 0 50%);background-size:2px 2px;box-shadow:inset 1px 1px #808080,inset -1px -1px #fff"></div><div class="a" style="left:408px;top:46px;width:31px;height:22px;background-color:#fff;background-image:repeating-conic-gradient(#d4d0c8 0 25%,#fff 0 50%);background-size:2px 2px;box-shadow:inset 1px 1px #808080,inset -1px -1px #fff"></div><svg class="a" style="left:0;top:0" width="1365" height="741" shape-rendering="crispEdges"><path d="M15 53h9v1h-9zM15 54h9v1h-9zM15 55h9v1h-9zM15 56h9v1h-9zM15 57h9v1h-9zM15 58h9v1h-9zM15 59h9v1h-9zM15 60h9v1h-9zM15 61h9v1h-9zM15 62h9v1h-9zM206 52h2v1h-2zM206 53h4v1h-4zM206 54h6v1h-6zM206 55h8v1h-8zM206 56h10v1h-10zM206 57h12v1h-12zM206 58h13v1h-13zM206 59h11v1h-11zM206 60h9v1h-9zM206 61h7v1h-7zM206 62h5v1h-5zM206 63h2v1h-2zM274 52h2v1h-2zM274 53h4v1h-4zM274 54h6v1h-6zM274 55h8v1h-8zM274 56h10v1h-10zM274 57h12v1h-12zM274 58h13v1h-13zM274 59h11v1h-11zM274 60h9v1h-9zM274 61h7v1h-7zM274 62h5v1h-5zM274 63h2v1h-2zM240 52h10v1h-10zM239 53h11v1h-11zM238 54h12v1h-12zM238 55h12v1h-12zM238 56h12v1h-12zM238 57h12v1h-12zM238 58h12v1h-12zM238 59h12v1h-12zM238 60h12v1h-12zM238 61h11v1h-11zM238 62h10v1h-10zM308 52h10v1h-10zM307 53h11v1h-11zM306 54h12v1h-12zM306 55h12v1h-12zM306 56h12v1h-12zM306 57h12v1h-12zM306 58h12v1h-12zM306 59h12v1h-12zM306 60h12v1h-12zM306 61h11v1h-11zM306 62h10v1h-10zM378 53h1v1h-1zM378 54h1v1h-1zM378 55h1v1h-1zM378 56h1v1h-1zM378 57h1v1h-1zM378 58h1v1h-1zM378 59h1v1h-1zM378 60h1v1h-1zM378 61h1v1h-1zM378 62h1v1h-1zM378 62h16v1h-16zM480 53h1v1h-1zM480 54h1v1h-1zM480 55h1v1h-1zM480 56h1v1h-1zM480 57h1v1h-1zM480 58h1v1h-1zM480 59h1v1h-1zM480 60h1v1h-1zM480 61h1v1h-1zM480 62h1v1h-1zM480 62h20v1h-20zM512 53h2v1h-2zM512 54h2v1h-2zM512 55h2v1h-2zM512 56h2v1h-2zM512 57h2v1h-2zM512 58h2v1h-2zM512 59h2v1h-2zM512 60h2v1h-2zM512 61h2v1h-2zM512 62h2v1h-2z" fill="#808080"/><path d="M11 51h6v1h-6zM11 52h1v1h-1zM16 52h2v1h-2zM11 53h1v1h-1zM16 53h1v1h-1zM18 53h1v1h-1zM11 54h1v1h-1zM16 54h4v1h-4zM11 55h1v1h-1zM19 55h1v1h-1zM11 56h1v1h-1zM19 56h1v1h-1zM11 57h1v1h-1zM19 57h1v1h-1zM11 58h1v1h-1zM19 58h1v1h-1zM11 59h1v1h-1zM19 59h1v1h-1zM11 60h9v1h-9zM40 52h9v1h-9zM40 53h8v1h-8zM40 54h7v1h-7zM40 55h6v1h-6zM40 56h5v1h-5zM40 57h4v1h-4zM40 58h3v1h-3zM40 59h2v1h-2zM40 60h1v1h-1zM74 51h5v1h-5zM74 52h5v1h-5zM75 53h3v1h-3zM75 54h3v1h-3zM75 55h3v1h-3zM75 56h3v1h-3zM75 57h3v1h-3zM75 58h3v1h-3zM75 59h3v1h-3zM74 60h5v1h-5zM74 61h5v1h-5zM81 55h1v1h-1zM85 55h1v1h-1zM81 56h2v1h-2zM84 56h2v1h-2zM81 57h1v1h-1zM83 57h1v1h-1zM85 57h1v1h-1zM81 58h1v1h-1zM85 58h1v1h-1zM81 59h1v1h-1zM85 59h1v1h-1zM81 60h1v1h-1zM85 60h1v1h-1zM81 61h1v1h-1zM85 61h1v1h-1zM88 55h4v1h-4zM88 56h1v1h-1zM92 56h1v1h-1zM88 57h1v1h-1zM92 57h1v1h-1zM88 58h4v1h-4zM88 59h1v1h-1zM88 60h1v1h-1zM88 61h1v1h-1zM105 51h7v1h-7zM105 52h7v1h-7zM105 53h3v1h-3zM105 54h3v1h-3zM105 55h6v1h-6zM105 56h6v1h-6zM105 57h3v1h-3zM105 58h3v1h-3zM105 59h3v1h-3zM105 60h3v1h-3zM105 61h3v1h-3zM113 55h4v1h-4zM113 56h1v1h-1zM117 56h1v1h-1zM113 57h1v1h-1zM117 57h1v1h-1zM113 58h4v1h-4zM113 59h1v1h-1zM115 59h1v1h-1zM113 60h1v1h-1zM116 60h1v1h-1zM113 61h1v1h-1zM117 61h1v1h-1zM121 55h3v1h-3zM120 56h1v1h-1zM124 56h1v1h-1zM124 57h1v1h-1zM123 58h1v1h-1zM122 59h1v1h-1zM121 60h1v1h-1zM120 61h5v1h-5zM136 51h7v1h-7zM136 52h7v1h-7zM136 53h3v1h-3zM136 54h3v1h-3zM136 55h6v1h-6zM136 56h6v1h-6zM136 57h3v1h-3zM136 58h3v1h-3zM136 59h3v1h-3zM136 60h3v1h-3zM136 61h3v1h-3zM144 55h4v1h-4zM144 56h1v1h-1zM148 56h1v1h-1zM144 57h1v1h-1zM148 57h1v1h-1zM144 58h4v1h-4zM144 59h1v1h-1zM146 59h1v1h-1zM144 60h1v1h-1zM147 60h1v1h-1zM144 61h1v1h-1zM148 61h1v1h-1zM152 55h1v1h-1zM151 56h2v1h-2zM152 57h1v1h-1zM152 58h1v1h-1zM152 59h1v1h-1zM152 60h1v1h-1zM151 61h3v1h-3zM168 52h5v1h-5zM167 53h3v1h-3zM172 53h2v1h-2zM167 54h3v1h-3zM167 55h4v1h-4zM168 56h5v1h-5zM169 57h5v1h-5zM171 58h3v1h-3zM171 59h3v1h-3zM167 60h2v1h-2zM171 60h3v1h-3zM168 61h5v1h-5zM176 56h4v1h-4zM176 57h1v1h-1zM180 57h1v1h-1zM176 58h1v1h-1zM180 58h1v1h-1zM176 59h4v1h-4zM176 60h1v1h-1zM176 61h1v1h-1zM176 62h1v1h-1zM183 56h3v1h-3zM182 57h1v1h-1zM186 57h1v1h-1zM182 58h1v1h-1zM186 58h1v1h-1zM182 59h5v1h-5zM182 60h1v1h-1zM186 60h1v1h-1zM182 61h1v1h-1zM186 61h1v1h-1zM182 62h1v1h-1zM186 62h1v1h-1zM482 51h19v1h-19zM481 52h2v1h-2zM500 52h2v1h-2zM481 53h1v1h-1zM501 53h1v1h-1zM481 54h1v1h-1zM501 54h1v1h-1zM481 55h1v1h-1zM501 55h1v1h-1zM481 56h1v1h-1zM501 56h1v1h-1zM481 57h1v1h-1zM501 57h1v1h-1zM481 58h1v1h-1zM501 58h1v1h-1zM481 59h1v1h-1zM501 59h1v1h-1zM481 60h2v1h-2zM500 60h2v1h-2zM482 61h19v1h-19z" fill="#000080"/><path d="M12 52h4v1h-4zM12 53h4v1h-4zM17 53h1v1h-1zM19 53h1v1h-1zM12 54h4v1h-4zM12 55h7v1h-7zM12 56h7v1h-7zM12 57h7v1h-7zM12 58h7v1h-7zM12 59h7v1h-7zM483 52h17v1h-17zM482 53h19v1h-19zM482 54h7v1h-7zM493 54h8v1h-8zM482 55h5v1h-5zM490 55h2v1h-2zM494 55h4v1h-4zM500 55h1v1h-1zM482 56h5v1h-5zM488 56h5v1h-5zM495 56h3v1h-3zM500 56h1v1h-1zM482 57h12v1h-12zM499 57h2v1h-2zM482 58h13v1h-13zM498 58h3v1h-3zM482 59h19v1h-19zM483 60h17v1h-17z" fill="#d4d0c8"/><path d="M52 52h1v1h-1zM51 53h2v1h-2zM50 54h3v1h-3zM49 55h4v1h-4zM48 56h5v1h-5zM47 57h6v1h-6zM46 58h7v1h-7zM45 59h8v1h-8zM44 60h9v1h-9zM250 55h1v1h-1zM250 56h1v1h-1zM250 57h1v1h-1zM250 58h1v1h-1zM250 59h1v1h-1zM250 60h1v1h-1zM250 61h1v1h-1zM249 62h2v1h-2zM239 63h11v1h-11zM318 55h1v1h-1zM318 56h1v1h-1zM318 57h1v1h-1zM318 58h1v1h-1zM318 59h1v1h-1zM318 60h1v1h-1zM318 61h1v1h-1zM317 62h2v1h-2zM307 63h11v1h-11z" fill="#ffffff"/><path d="M208 51h2v1h-2zM208 52h4v1h-4zM208 53h6v1h-6zM208 54h8v1h-8zM208 55h10v1h-10zM208 56h12v1h-12zM208 57h13v1h-13zM208 58h11v1h-11zM208 59h9v1h-9zM208 60h7v1h-7zM208 61h5v1h-5zM208 62h2v1h-2zM446 53h16v1h-16zM445 54h18v1h-18zM445 55h4v1h-4zM450 55h5v1h-5zM456 55h7v1h-7zM445 56h3v1h-3zM451 56h3v1h-3zM457 56h1v1h-1zM459 56h3v1h-3zM452 57h1v1h-1zM460 57h1v1h-1zM489 54h4v1h-4zM487 55h3v1h-3zM492 55h2v1h-2zM498 55h2v1h-2zM487 56h1v1h-1zM493 56h2v1h-2zM498 56h2v1h-2zM494 57h5v1h-5zM495 58h3v1h-3z" fill="#ff0000"/><path d="M276 51h2v1h-2zM276 52h4v1h-4zM276 53h6v1h-6zM276 54h8v1h-8zM276 55h10v1h-10zM276 56h12v1h-12zM276 57h13v1h-13zM276 58h11v1h-11zM276 59h9v1h-9zM276 60h7v1h-7zM276 61h5v1h-5zM276 62h2v1h-2zM339 52h21v1h-21zM339 53h7v1h-7zM339 54h6v1h-6zM339 55h5v1h-5zM339 56h4v1h-4zM339 57h3v1h-3zM339 58h2v1h-2zM339 59h1v1h-1zM346 56h2v1h-2zM345 57h1v1h-1zM348 57h1v1h-1zM345 58h1v1h-1zM348 58h1v1h-1zM345 59h4v1h-4zM345 60h1v1h-1zM348 60h1v1h-1zM345 61h1v1h-1zM348 61h1v1h-1zM350 56h3v1h-3zM350 57h1v1h-1zM353 57h1v1h-1zM350 58h3v1h-3zM350 59h1v1h-1zM353 59h1v1h-1zM350 60h1v1h-1zM353 60h1v1h-1zM350 61h3v1h-3zM356 56h2v1h-2zM355 57h1v1h-1zM358 57h1v1h-1zM355 58h1v1h-1zM355 59h1v1h-1zM355 60h1v1h-1zM358 60h1v1h-1zM356 61h2v1h-2zM449 55h1v1h-1zM455 55h1v1h-1zM448 56h3v1h-3zM454 56h3v1h-3zM458 56h1v1h-1zM462 56h1v1h-1zM445 57h7v1h-7zM453 57h7v1h-7zM461 57h2v1h-2zM445 58h18v1h-18zM445 59h18v1h-18zM445 60h18v1h-18zM445 61h18v1h-18z" fill="#0000ff"/><path d="M379 52h3v1h-3zM388 52h7v1h-7zM380 53h3v1h-3zM389 53h6v1h-6zM381 54h3v1h-3zM390 54h5v1h-5zM382 55h3v1h-3zM391 55h4v1h-4zM383 56h3v1h-3zM392 56h3v1h-3zM384 57h3v1h-3zM393 57h2v1h-2zM385 58h3v1h-3zM394 58h1v1h-1zM386 59h3v1h-3z" fill="#008080"/><path d="M383 52h3v1h-3zM384 53h3v1h-3zM379 54h1v1h-1zM385 54h3v1h-3zM379 55h1v1h-1zM386 55h3v1h-3zM379 56h1v1h-1zM387 56h3v1h-3zM379 57h1v1h-1zM388 57h3v1h-3zM379 58h1v1h-1zM389 58h3v1h-3zM379 59h1v1h-1zM390 59h3v1h-3zM379 60h1v1h-1zM391 60h3v1h-3zM379 61h16v1h-16zM515 53h14v1h-14zM515 54h14v1h-14zM515 55h3v1h-3zM519 55h7v1h-7zM528 55h1v1h-1zM515 56h2v1h-2zM518 56h1v1h-1zM520 56h5v1h-5zM526 56h3v1h-3zM515 57h1v1h-1zM517 57h3v1h-3zM521 57h3v1h-3zM525 57h4v1h-4zM515 58h6v1h-6zM524 58h5v1h-5zM515 59h14v1h-14zM515 60h14v1h-14z" fill="#008000"/><path d="M515 51h15v1h-15zM514 52h17v1h-17zM513 53h2v1h-2zM529 53h2v1h-2zM513 54h2v1h-2zM529 54h2v1h-2zM513 55h2v1h-2zM529 55h2v1h-2zM513 56h2v1h-2zM529 56h2v1h-2zM513 57h2v1h-2zM529 57h2v1h-2zM513 58h2v1h-2zM529 58h2v1h-2zM513 59h2v1h-2zM529 59h2v1h-2zM513 60h2v1h-2zM529 60h2v1h-2zM514 61h17v1h-17zM515 62h15v1h-15z" fill="#808000"/><path d="M518 55h1v1h-1zM526 55h2v1h-2zM517 56h1v1h-1zM519 56h1v1h-1zM525 56h1v1h-1zM516 57h1v1h-1zM520 57h1v1h-1zM524 57h1v1h-1zM521 58h3v1h-3z" fill="#ffff00"/><path d="M428 54h5v1h-5zM427 55h2v1h-2zM432 55h2v1h-2zM415 56h14v1h-14zM433 56h1v1h-1zM415 57h1v1h-1zM427 57h2v1h-2zM433 57h1v1h-1zM415 58h1v1h-1zM427 58h2v1h-2zM433 58h1v1h-1zM415 59h14v1h-14zM433 59h1v1h-1zM427 60h2v1h-2zM432 60h2v1h-2zM428 61h5v1h-5z" fill="#000080"/><path d="M429 55h2v1h-2zM429 56h2v1h-2zM419 57h8v1h-8zM429 57h2v1h-2zM420 58h7v1h-7zM429 58h2v1h-2zM429 59h2v1h-2zM429 60h2v1h-2z" fill="#ffffff"/><path d="M431 55h1v1h-1zM431 56h2v1h-2zM416 57h3v1h-3zM431 57h2v1h-2zM416 58h4v1h-4zM431 58h2v1h-2zM431 59h2v1h-2zM431 60h1v1h-1z" fill="#808080"/></svg></body></html>
